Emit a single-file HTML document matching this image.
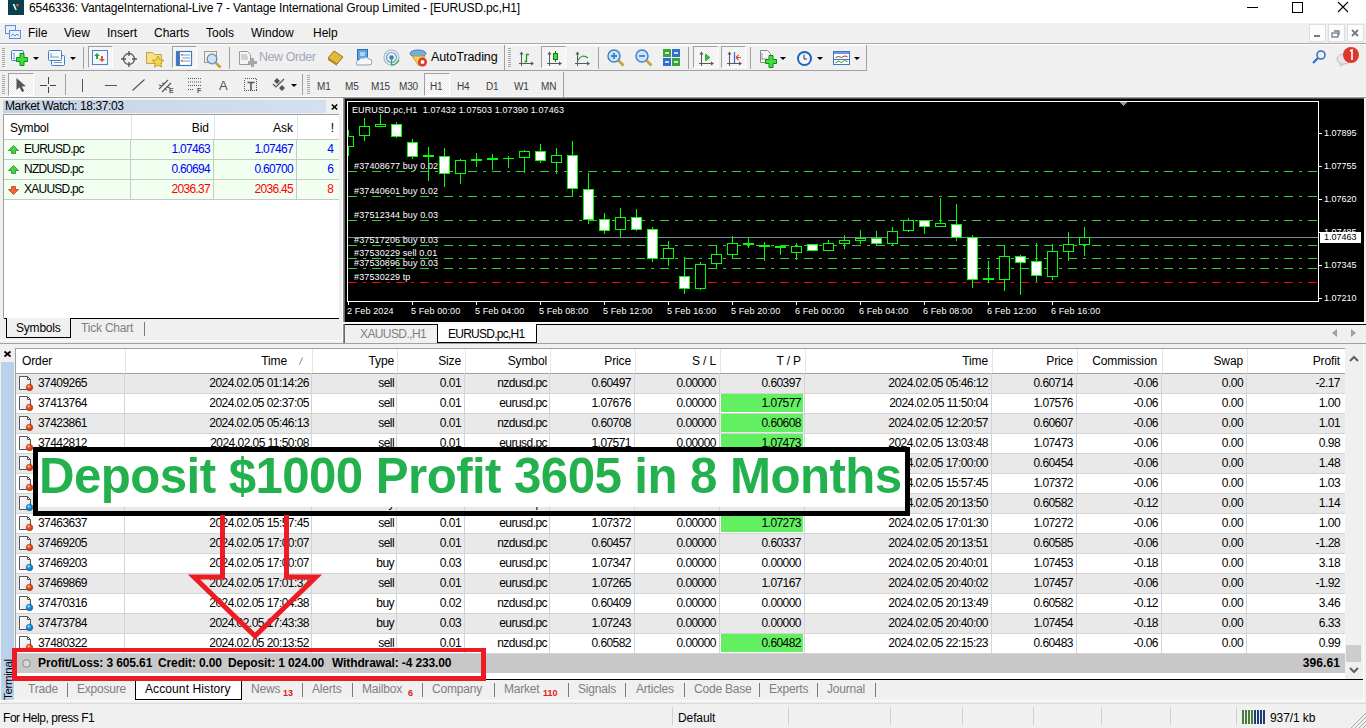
<!DOCTYPE html><html><head><meta charset="utf-8"><style>*{margin:0;padding:0;box-sizing:border-box}
html,body{width:1366px;height:728px;overflow:hidden;background:#f0f0f0;font-family:"Liberation Sans", sans-serif;position:relative}
.t{position:absolute;white-space:nowrap;font-size:12px;line-height:14px;color:#000}
svg{position:absolute;overflow:visible}
</style></head><body><svg width="0" height="0" style="position:absolute"><defs><radialGradient id="gr" cx="35%" cy="30%" r="70%"><stop offset="0" stop-color="#ffd0b0"/><stop offset=".35" stop-color="#f5602a"/><stop offset="1" stop-color="#c8340c"/></radialGradient><radialGradient id="gb" cx="35%" cy="30%" r="70%"><stop offset="0" stop-color="#d0f0ff"/><stop offset=".35" stop-color="#20a8f0"/><stop offset="1" stop-color="#0a70c0"/></radialGradient><linearGradient id="gd" x1="0" y1="0" x2="1" y2="1"><stop offset="0" stop-color="#fff"/><stop offset="1" stop-color="#e4e4e4"/></linearGradient></defs></svg>
<div style="position:absolute;left:0px;top:0px;width:1366px;height:23px;background:#fff"></div>
<div style="position:absolute;left:8px;top:0px;width:16px;height:15px;background:#07414f"></div>
<svg style="left:8px;top:0px;" width="16" height="15" viewBox="0 0 16 15"><path d="M4.6 4 L6.3 4 L8.9 10 L7.3 10Z" fill="#fff"/><path d="M7.8 4 H11.2 L9.5 7.6Z" fill="#ee5a24"/></svg>
<div class="t" style="left:29px;top:0px;font-size:12px;line-height:16px;letter-spacing:-0.15px">6546336: VantageInternational-Live 7 - Vantage International Group Limited - [EURUSD.pc,H1]</div>
<svg style="left:1240px;top:0px;" width="126" height="16" viewBox="0 0 126 16"><path d="M7 7.5 H18" stroke="#000"/><rect x="52.5" y="2.5" width="10" height="10" fill="none" stroke="#000"/><path d="M98 2 L108 12 M108 2 L98 12" stroke="#000" stroke-width="1.1"/></svg>
<div style="position:absolute;left:0px;top:43px;width:1366px;height:1px;background:#a9a9a9"></div>
<div style="position:absolute;left:0px;top:44px;width:1366px;height:1px;background:#fdfdfd"></div>
<svg style="left:4px;top:24px;" width="18" height="16" viewBox="0 0 18 16"><rect x="1.5" y="1.5" width="10" height="8" fill="#eaf1fb" stroke="#5d8fd8"/><rect x="5.5" y="6.5" width="11" height="8" fill="#eaf1fb" stroke="#5d8fd8"/><path d="M7 12 l2 -2 l2 2 l2 -2 l2 2" stroke="#5d8fd8" fill="none"/></svg>
<div class="t" style="left:28px;top:25px;font-size:12px;line-height:16px">File</div>
<div class="t" style="left:64px;top:25px;font-size:12px;line-height:16px">View</div>
<div class="t" style="left:107px;top:25px;font-size:12px;line-height:16px">Insert</div>
<div class="t" style="left:154px;top:25px;font-size:12px;line-height:16px">Charts</div>
<div class="t" style="left:206px;top:25px;font-size:12px;line-height:16px">Tools</div>
<div class="t" style="left:251px;top:25px;font-size:12px;line-height:16px">Window</div>
<div class="t" style="left:313px;top:25px;font-size:12px;line-height:16px">Help</div>
<div style="position:absolute;left:1309px;top:24px;width:17px;height:18px;background:#fcfcfc;border:1px solid #dedede"></div>
<div style="position:absolute;left:1328px;top:24px;width:17px;height:18px;background:#fcfcfc;border:1px solid #dedede"></div>
<div style="position:absolute;left:1347px;top:24px;width:17px;height:18px;background:#fcfcfc;border:1px solid #dedede"></div>
<svg style="left:1309px;top:24px;" width="57" height="18" viewBox="0 0 57 18"><rect x="5" y="11" width="6" height="2" fill="#6d7c8a"/><rect x="23" y="9" width="6" height="4" fill="none" stroke="#6d7c8a" stroke-width="1.3"/><path d="M25 7 h5 v4" fill="none" stroke="#6d7c8a" stroke-width="1.3"/><path d="M43 6 l6 6 M49 6 l-6 6" stroke="#6d7c8a" stroke-width="1.8"/></svg>
<div style="position:absolute;left:0px;top:70px;width:866px;height:1px;background:#a0a0a0"></div>
<div style="position:absolute;left:866px;top:45px;width:1px;height:26px;background:#a0a0a0"></div>
<div style="position:absolute;left:505px;top:45px;width:361px;height:1px;background:#fafafa"></div>
<div style="position:absolute;left:504px;top:45px;width:1px;height:26px;background:#a0a0a0"></div>
<svg style="left:2px;top:48px;" width="3" height="19" viewBox="0 0 3 19"><rect x="0" y="0" width="3" height="1" fill="#a8a8a8"/><rect x="0" y="2" width="3" height="1" fill="#a8a8a8"/><rect x="0" y="4" width="3" height="1" fill="#a8a8a8"/><rect x="0" y="6" width="3" height="1" fill="#a8a8a8"/><rect x="0" y="8" width="3" height="1" fill="#a8a8a8"/><rect x="0" y="10" width="3" height="1" fill="#a8a8a8"/><rect x="0" y="12" width="3" height="1" fill="#a8a8a8"/><rect x="0" y="14" width="3" height="1" fill="#a8a8a8"/><rect x="0" y="16" width="3" height="1" fill="#a8a8a8"/><rect x="0" y="18" width="3" height="1" fill="#a8a8a8"/></svg>
<svg style="left:11px;top:50px;" width="18" height="16" viewBox="0 0 18 16"><rect x="0.5" y="0.5" width="12" height="10" rx="1" fill="#f2f7fd" stroke="#3f7fc8"/><path d="M3 3 v6 M2 4 l1 -1 l1 1 M2 8 l1 1 l1 -1" stroke="#7d9cc0" fill="none"/><path d="M5.5 7.5 h3.5 v-4 h4 v4 h3.5 v4 h-3.5 v4 h-4 v-4 h-3.5Z" fill="#3ee03e" stroke="#15881a"/></svg>
<svg style="left:33px;top:57px;" width="6" height="3" viewBox="0 0 6 3"><path d="M0 0 H6 L3 3Z" fill="#000"/></svg>
<svg style="left:48px;top:50px;" width="18" height="17" viewBox="0 0 18 17"><rect x="3.5" y="5.5" width="13" height="10" rx="1" fill="#f4f8fd" stroke="#3f7fc8"/><rect x="0.5" y="0.5" width="13" height="10" rx="1" fill="#f4f8fd" stroke="#3f7fc8"/><path d="M3 3 v5 M3 7 h8 M6 12.5 h8" stroke="#7d9cc0" fill="none"/></svg>
<svg style="left:70px;top:57px;" width="6" height="3" viewBox="0 0 6 3"><path d="M0 0 H6 L3 3Z" fill="#000"/></svg>
<div style="position:absolute;left:83px;top:47px;width:1px;height:22px;background:#a0a0a0"></div>
<div style="position:absolute;left:88px;top:46px;width:25px;height:22px;background-color:#f9f9f9;background-image:repeating-conic-gradient(#ededed 0 25%,#fbfbfb 0 50%);background-size:2px 2px;border-top:1px solid #a0a0a0;border-left:1px solid #a0a0a0;border-right:1px solid #fff;border-bottom:1px solid #fff"></div>
<svg style="left:92px;top:50px;" width="17" height="16" viewBox="0 0 17 16"><rect x="0.5" y="0.5" width="15" height="14" fill="#f4f8fd" stroke="#4b82c8"/><path d="M5 3 l-3 3 h2 v3 h2 v-3 h2Z" fill="#2aa52a"/><path d="M10 12 l3 -3 h-2 v-3 h-2 v3 h-2Z" fill="#e5542a"/></svg>
<svg style="left:121px;top:50.5px;" width="16" height="16" viewBox="0 0 16 16"><circle cx="8" cy="8" r="5.5" fill="none" stroke="#555" stroke-width="1.3"/><path d="M8 0 v5 M8 11 v5 M0 8 h5 M11 8 h5" stroke="#555" stroke-width="1.3"/></svg>
<svg style="left:146px;top:50px;" width="19" height="18" viewBox="0 0 19 18"><path d="M0.5 2.5 h6 l2 2 h7 v9 h-15Z" fill="#f7e08a" stroke="#c9a236"/><path d="M12 6 l1.8 3.8 4 .5 -3 2.8 .8 4 -3.6 -2 -3.6 2 .8 -4 -3 -2.8 4 -.5Z" fill="#f8d548" stroke="#b8902a" stroke-width=".8"/></svg>
<div style="position:absolute;left:172px;top:46px;width:25px;height:22px;background-color:#f9f9f9;background-image:repeating-conic-gradient(#ededed 0 25%,#fbfbfb 0 50%);background-size:2px 2px;border-top:1px solid #a0a0a0;border-left:1px solid #a0a0a0;border-right:1px solid #fff;border-bottom:1px solid #fff"></div>
<svg style="left:176px;top:51px;" width="17" height="16" viewBox="0 0 17 16"><rect x="0.5" y="0.5" width="15" height="14" fill="#fff" stroke="#3f78c6" stroke-width="1.2"/><rect x="1" y="1" width="3" height="13" fill="#3f78c6"/><path d="M6 4 h8 M6 7 h8 M6 10 h8" stroke="#7a9cc9"/><rect x="5" y="3" width="1.5" height="1.5" fill="#e33"/><rect x="5" y="9" width="1.5" height="1.5" fill="#e33"/></svg>
<svg style="left:204px;top:51px;" width="19" height="18" viewBox="0 0 19 18"><rect x="0.5" y="0.5" width="12" height="11" fill="#f3efe2" stroke="#a39a85"/><circle cx="8" cy="8" r="4.8" fill="#cfe1f5" stroke="#4a86cf" stroke-width="1.3" opacity=".9"/><path d="M11.5 11.5 l5 5" stroke="#c9a236" stroke-width="2.5"/></svg>
<div style="position:absolute;left:229px;top:47px;width:1px;height:22px;background:#a0a0a0"></div>
<svg style="left:239px;top:50.5px;" width="18" height="19" viewBox="0 0 18 19"><path d="M0.5 0.5 h8 l3 3 v10 h-11Z" fill="#f5f5f5" stroke="#9a9a9a"/><path d="M2 4 h6 M2 6 h7 M2 8 h7" stroke="#b0b0b0"/><path d="M9 10 h3 v-3 h3 v3 h3 v3 h-3 v3 h-3 v-3 h-3Z" fill="#a8a8a8"/></svg>
<div class="t" style="left:259px;top:49px;font-size:12.5px;line-height:16px;color:#a3a9b6;letter-spacing:-0.45px">New Order</div>
<svg style="left:327px;top:50px;" width="17" height="16" viewBox="0 0 17 16"><path d="M1 8 L7 1 L16 7 L10 14Z" fill="#e3b93a" stroke="#9c7314"/><path d="M1 8 L10 14 L10 16 L1 10Z" fill="#b68a1c"/></svg>
<svg style="left:355px;top:49px;" width="17" height="18" viewBox="0 0 17 18"><rect x="2.5" y="0.5" width="10" height="10" fill="#5aa7e8" stroke="#2f6fb5"/><path d="M5 4 h5 M5 6 h5" stroke="#fff"/><path d="M2 16 q-2 -4 2 -5 q1 -3 5 -2 q3 -2 5 1 q3 0 3 3 q0 3 -3 3Z" fill="#f3f6fa" stroke="#8aa3bf"/></svg>
<svg style="left:383px;top:49px;" width="17" height="17" viewBox="0 0 17 17"><circle cx="8.5" cy="8.5" r="7.5" fill="none" stroke="#9fb7d6" stroke-width="1.2"/><circle cx="8.5" cy="8.5" r="5" fill="none" stroke="#6f9cd3" stroke-width="1.2"/><circle cx="8.5" cy="8.5" r="2.3" fill="#3c7bd0"/><path d="M8.5 8.5 v8 M9 16 q4 0 7 -5" stroke="#35b035" stroke-width="1.3" fill="none"/></svg>
<svg style="left:410px;top:49px;" width="18" height="18" viewBox="0 0 18 18"><ellipse cx="8" cy="4.5" rx="8" ry="3.5" fill="#70afe3" stroke="#3f7dbb"/><path d="M2 7 L9 17 L15 7Z" fill="#f1d45a" stroke="#c69d28"/><circle cx="12.5" cy="13" r="4.5" fill="#e23a2a"/><rect x="10.8" y="11.3" width="3.4" height="3.4" fill="#fff"/></svg>
<div class="t" style="left:431px;top:49px;font-size:12.5px;line-height:16px;letter-spacing:-0.1px">AutoTrading</div>
<svg style="left:508px;top:48px;" width="3" height="19" viewBox="0 0 3 19"><rect x="0" y="0" width="3" height="1" fill="#a8a8a8"/><rect x="0" y="2" width="3" height="1" fill="#a8a8a8"/><rect x="0" y="4" width="3" height="1" fill="#a8a8a8"/><rect x="0" y="6" width="3" height="1" fill="#a8a8a8"/><rect x="0" y="8" width="3" height="1" fill="#a8a8a8"/><rect x="0" y="10" width="3" height="1" fill="#a8a8a8"/><rect x="0" y="12" width="3" height="1" fill="#a8a8a8"/><rect x="0" y="14" width="3" height="1" fill="#a8a8a8"/><rect x="0" y="16" width="3" height="1" fill="#a8a8a8"/><rect x="0" y="18" width="3" height="1" fill="#a8a8a8"/></svg>
<svg style="left:518px;top:51px;" width="17" height="16" viewBox="0 0 17 16"><path d="M3.5 2 V15 M1 12.5 H15" stroke="#585858" fill="none"/><path d="M1.5 3.5 L3.5 0.5 L5.5 3.5Z M13 10.5 L16 12.5 L13 14.5Z" fill="#585858"/><path d="M6.5 10.5 H8.5 V3.5 H11" stroke="#1f9a1f" stroke-width="1.3" fill="none"/></svg>
<div style="position:absolute;left:541px;top:46px;width:25px;height:22px;background-color:#f9f9f9;background-image:repeating-conic-gradient(#ededed 0 25%,#fbfbfb 0 50%);background-size:2px 2px;border-top:1px solid #a0a0a0;border-left:1px solid #a0a0a0;border-right:1px solid #fff;border-bottom:1px solid #fff"></div>
<svg style="left:546px;top:51px;" width="17" height="16" viewBox="0 0 17 16"><path d="M3.5 2 V15 M1 12.5 H15" stroke="#585858" fill="none"/><path d="M1.5 3.5 L3.5 0.5 L5.5 3.5Z M13 10.5 L16 12.5 L13 14.5Z" fill="#585858"/><path d="M9.5 0 V11" stroke="#137a13"/><rect x="7.5" y="2.5" width="4" height="6" fill="#3ee03e" stroke="#137a13"/></svg>
<svg style="left:574px;top:51px;" width="17" height="16" viewBox="0 0 17 16"><path d="M3.5 2 V15 M1 12.5 H15" stroke="#585858" fill="none"/><path d="M1.5 3.5 L3.5 0.5 L5.5 3.5Z M13 10.5 L16 12.5 L13 14.5Z" fill="#585858"/><path d="M3.5 10 Q8 2 14 7" stroke="#2a9a3a" stroke-width="1.2" fill="none"/></svg>
<div style="position:absolute;left:598px;top:47px;width:1px;height:22px;background:#a0a0a0"></div>
<svg style="left:607px;top:49px;" width="18" height="18" viewBox="0 0 18 18"><circle cx="7" cy="7" r="6" fill="#cfe4f8" stroke="#3f82cc" stroke-width="1.5"/><path d="M4 7 h6 M7 4 v6" stroke="#3f82cc" stroke-width="1.8"/><path d="M11.5 11.5 l5 5" stroke="#c9a236" stroke-width="2.8"/></svg>
<svg style="left:635px;top:49px;" width="18" height="18" viewBox="0 0 18 18"><circle cx="7" cy="7" r="6" fill="#cfe4f8" stroke="#3f82cc" stroke-width="1.5"/><path d="M4 7 h6" stroke="#3f82cc" stroke-width="1.8"/><path d="M11.5 11.5 l5 5" stroke="#c9a236" stroke-width="2.8"/></svg>
<svg style="left:663px;top:49px;" width="17" height="17" viewBox="0 0 17 17"><rect x="0" y="0" width="8" height="8" fill="#3aa53a"/><rect x="9" y="0" width="8" height="8" fill="#2f6fcf"/><rect x="0" y="9" width="8" height="8" fill="#2f6fcf"/><rect x="9" y="9" width="8" height="8" fill="#3aa53a"/><path d="M2 4 h4 M11 4 h4 M2 13 h4 M11 13 h4" stroke="#fff" stroke-width="1.5"/></svg>
<div style="position:absolute;left:688px;top:47px;width:1px;height:22px;background:#a0a0a0"></div>
<div style="position:absolute;left:693px;top:46px;width:25px;height:22px;background-color:#f9f9f9;background-image:repeating-conic-gradient(#ededed 0 25%,#fbfbfb 0 50%);background-size:2px 2px;border-top:1px solid #a0a0a0;border-left:1px solid #a0a0a0;border-right:1px solid #fff;border-bottom:1px solid #fff"></div>
<svg style="left:698px;top:51px;" width="17" height="16" viewBox="0 0 17 16"><path d="M3.5 2 V15 M1 12.5 H15" stroke="#585858" fill="none"/><path d="M1.5 3.5 L3.5 0.5 L5.5 3.5Z M13 10.5 L16 12.5 L13 14.5Z" fill="#585858"/><path d="M7.5 3 L12 6.5 L7.5 10Z" fill="#2fc02f" stroke="#1b8a1b" stroke-width=".6"/></svg>
<div style="position:absolute;left:721px;top:46px;width:25px;height:22px;background-color:#f9f9f9;background-image:repeating-conic-gradient(#ededed 0 25%,#fbfbfb 0 50%);background-size:2px 2px;border-top:1px solid #a0a0a0;border-left:1px solid #a0a0a0;border-right:1px solid #fff;border-bottom:1px solid #fff"></div>
<svg style="left:726px;top:51px;" width="17" height="16" viewBox="0 0 17 16"><path d="M3.5 2 V15 M1 12.5 H15" stroke="#585858" fill="none"/><path d="M1.5 3.5 L3.5 0.5 L5.5 3.5Z M13 10.5 L16 12.5 L13 14.5Z" fill="#585858"/><path d="M8.5 1 V12" stroke="#2f6fcf" stroke-width="1.2"/><path d="M10 6.5 h5 M10 6.5 l2.5 -2.5 M10 6.5 l2.5 2.5" stroke="#d9502a" stroke-width="1.2" fill="none"/></svg>
<div style="position:absolute;left:750px;top:47px;width:1px;height:22px;background:#a0a0a0"></div>
<svg style="left:760px;top:50px;" width="18" height="18" viewBox="0 0 18 18"><path d="M0.5 0.5 h7 l3 3 v9 h-10Z" fill="#f7f7f7" stroke="#8a8a8a"/><path d="M2 3 v7 M2 9 h5" stroke="#999" fill="none"/><path d="M5.5 9.5 h3.5 v-4 h4 v4 h3.5 v4 h-3.5 v4 h-4 v-4 h-3.5Z" fill="#3ee03e" stroke="#15881a"/></svg>
<svg style="left:780px;top:57px;" width="6" height="3" viewBox="0 0 6 3"><path d="M0 0 H6 L3 3Z" fill="#000"/></svg>
<svg style="left:796px;top:50px;" width="17" height="17" viewBox="0 0 17 17"><circle cx="8.5" cy="8.5" r="7.5" fill="#1f63c0"/><circle cx="8.5" cy="8.5" r="5.5" fill="#f4f7fb"/><path d="M8 4.5 v4.5 h3" stroke="#333" stroke-width="1" fill="none"/></svg>
<svg style="left:817px;top:57px;" width="6" height="3" viewBox="0 0 6 3"><path d="M0 0 H6 L3 3Z" fill="#000"/></svg>
<svg style="left:833px;top:51px;" width="17" height="15" viewBox="0 0 17 15"><rect x="0.5" y="0.5" width="16" height="13" fill="#fff" stroke="#3f78c6"/><rect x="1" y="1" width="15" height="2" fill="#6f9ad8"/><path d="M1 8.5 h15" stroke="#3f78c6"/><path d="M2.5 6.5 l3 -1 l3 1 l3 -1.5 l3 0.5" stroke="#b0302a" fill="none"/><path d="M2.5 12 l3 -2 l3 1.5 l3 -2 l3 1" stroke="#2a9a2a" fill="none"/></svg>
<svg style="left:854px;top:57px;" width="6" height="3" viewBox="0 0 6 3"><path d="M0 0 H6 L3 3Z" fill="#000"/></svg>
<svg style="left:1312px;top:50px;" width="14" height="14" viewBox="0 0 14 14"><circle cx="9" cy="5" r="4" fill="none" stroke="#2f6fcf" stroke-width="1.6"/><path d="M6 8 l-5 5" stroke="#2f6fcf" stroke-width="2.2"/></svg>
<svg style="left:1334px;top:46px;" width="28" height="22" viewBox="0 0 28 22"><ellipse cx="10" cy="13" rx="7" ry="5" fill="#e6e6e6" stroke="#bdbdbd"/><path d="M7 17 l-1 3 l4 -2" fill="#e6e6e6" stroke="#bdbdbd"/><circle cx="17" cy="9" r="8" fill="#e0352a"/><path d="M16 5 l2 -1 v10" stroke="#fff" stroke-width="1.6" fill="none"/></svg>
<div style="position:absolute;left:0px;top:96px;width:1366px;height:1px;background:#fafafa"></div>
<div style="position:absolute;left:0px;top:97px;width:1366px;height:1px;background:#9a9a9a"></div>
<svg style="left:2px;top:75px;" width="3" height="19" viewBox="0 0 3 19"><rect x="0" y="0" width="3" height="1" fill="#a8a8a8"/><rect x="0" y="2" width="3" height="1" fill="#a8a8a8"/><rect x="0" y="4" width="3" height="1" fill="#a8a8a8"/><rect x="0" y="6" width="3" height="1" fill="#a8a8a8"/><rect x="0" y="8" width="3" height="1" fill="#a8a8a8"/><rect x="0" y="10" width="3" height="1" fill="#a8a8a8"/><rect x="0" y="12" width="3" height="1" fill="#a8a8a8"/><rect x="0" y="14" width="3" height="1" fill="#a8a8a8"/><rect x="0" y="16" width="3" height="1" fill="#a8a8a8"/><rect x="0" y="18" width="3" height="1" fill="#a8a8a8"/></svg>
<div style="position:absolute;left:8px;top:73px;width:26px;height:23px;background-color:#f9f9f9;background-image:repeating-conic-gradient(#ededed 0 25%,#fbfbfb 0 50%);background-size:2px 2px;border-top:1px solid #a0a0a0;border-left:1px solid #a0a0a0;border-right:1px solid #fff;border-bottom:1px solid #fff"></div>
<svg style="left:16px;top:78px;" width="11" height="15" viewBox="0 0 11 15"><path d="M0.5 0 L0.5 12 L3.5 9.3 L6 14 L8.3 13 L5.8 8.5 L9.8 8.2Z" fill="#555"/></svg>
<svg style="left:40px;top:77px;" width="16" height="16" viewBox="0 0 16 16"><path d="M8.5 0 v7 M8.5 10 v6 M0 8.5 h7 M10 8.5 h6" stroke="#444" stroke-width="1"/></svg>
<div style="position:absolute;left:65px;top:74px;width:1px;height:21px;background:#a0a0a0"></div>
<div style="position:absolute;left:82px;top:79px;width:1px;height:13px;background:#555"></div>
<div style="position:absolute;left:105px;top:85px;width:12px;height:1px;background:#555"></div>
<svg style="left:132px;top:79px;" width="13" height="12" viewBox="0 0 13 12"><path d="M0.5 11.5 L12.5 0.5" stroke="#555" stroke-width="1.1"/></svg>
<svg style="left:158px;top:77px;" width="17" height="16" viewBox="0 0 17 16"><path d="M1 12 L10 3 M4 15 L13 6 M1 8 l3 1 M4 6 l3 1 M6 12 l3 1 M9 10 l3 1" stroke="#555" stroke-width="1.1"/><text x="11" y="16" font-size="7" font-weight="bold" fill="#555" font-family="Liberation Sans">E</text></svg>
<svg style="left:188px;top:77px;" width="15" height="16" viewBox="0 0 15 16"><path d="M0 1.5 h13 M0 5 h13 M0 8.5 h13 M0 12.5 h6" stroke="#555" stroke-dasharray="1 1"/><text x="9" y="16" font-size="7" font-weight="bold" fill="#555" font-family="Liberation Sans">F</text></svg>
<div class="t" style="left:219px;top:78px;font-size:13px;line-height:16px;color:#555">A</div>
<svg style="left:244px;top:78px;" width="14" height="14" viewBox="0 0 14 14"><rect x="0.5" y="0.5" width="12" height="12" fill="none" stroke="#555" stroke-dasharray="1 1" shape-rendering="crispEdges"/><path d="M3.5 4.5 h7 M7 4.5 v8" stroke="#555" stroke-width="1.6"/></svg>
<svg style="left:272px;top:77px;" width="15" height="15" viewBox="0 0 15 15"><path d="M2 4 l3 -3 l3 3 l-3 3Z M7 11 l3 -3 l3 3 l-3 3Z" fill="#555"/><path d="M1 7 l3 3 l8 -8" stroke="#555" fill="none" stroke-width="1.2"/></svg>
<svg style="left:291px;top:84px;" width="6" height="3" viewBox="0 0 6 3"><path d="M0 0 H6 L3 3Z" fill="#000"/></svg>
<div style="position:absolute;left:302px;top:74px;width:1px;height:21px;background:#a0a0a0"></div>
<svg style="left:307px;top:75px;" width="3" height="19" viewBox="0 0 3 19"><rect x="0" y="0" width="3" height="1" fill="#a8a8a8"/><rect x="0" y="2" width="3" height="1" fill="#a8a8a8"/><rect x="0" y="4" width="3" height="1" fill="#a8a8a8"/><rect x="0" y="6" width="3" height="1" fill="#a8a8a8"/><rect x="0" y="8" width="3" height="1" fill="#a8a8a8"/><rect x="0" y="10" width="3" height="1" fill="#a8a8a8"/><rect x="0" y="12" width="3" height="1" fill="#a8a8a8"/><rect x="0" y="14" width="3" height="1" fill="#a8a8a8"/><rect x="0" y="16" width="3" height="1" fill="#a8a8a8"/><rect x="0" y="18" width="3" height="1" fill="#a8a8a8"/></svg>
<div class="t" style="left:317px;top:79.5px;font-size:10px;line-height:13px;color:#3c3c3c;letter-spacing:-0.15px">M1</div>
<div class="t" style="left:345px;top:79.5px;font-size:10px;line-height:13px;color:#3c3c3c;letter-spacing:-0.15px">M5</div>
<div class="t" style="left:371px;top:79.5px;font-size:10px;line-height:13px;color:#3c3c3c;letter-spacing:-0.15px">M15</div>
<div class="t" style="left:399px;top:79.5px;font-size:10px;line-height:13px;color:#3c3c3c;letter-spacing:-0.15px">M30</div>
<div style="position:absolute;left:424px;top:73px;width:26px;height:23px;background-color:#f9f9f9;background-image:repeating-conic-gradient(#ededed 0 25%,#fbfbfb 0 50%);background-size:2px 2px;border-top:1px solid #a0a0a0;border-left:1px solid #a0a0a0;border-right:1px solid #fff;border-bottom:1px solid #fff"></div>
<div class="t" style="left:430px;top:79.5px;font-size:10px;line-height:13px;color:#3c3c3c;letter-spacing:-0.15px">H1</div>
<div class="t" style="left:457px;top:79.5px;font-size:10px;line-height:13px;color:#3c3c3c;letter-spacing:-0.15px">H4</div>
<div class="t" style="left:486px;top:79.5px;font-size:10px;line-height:13px;color:#3c3c3c;letter-spacing:-0.15px">D1</div>
<div class="t" style="left:514px;top:79.5px;font-size:10px;line-height:13px;color:#3c3c3c;letter-spacing:-0.15px">W1</div>
<div class="t" style="left:541px;top:79.5px;font-size:10px;line-height:13px;color:#3c3c3c;letter-spacing:-0.15px">MN</div>
<div style="position:absolute;left:563px;top:72px;width:1px;height:25px;background:#a0a0a0"></div>
<div style="position:absolute;left:0px;top:98px;width:344px;height:245px;background:#f0f0f0;border-top:1px solid #fafafa"></div>
<div style="position:absolute;left:3px;top:100px;width:323px;height:13px;background:linear-gradient(to right,#c5d3e3,#d3e0ee)"></div>
<div class="t" style="left:5px;top:99px;font-size:12px;line-height:14px;letter-spacing:-0.38px">Market Watch: 18:37:03</div>
<svg style="left:331px;top:104px;" width="7" height="6" viewBox="0 0 7 6"><path d="M0.8 0.5 l5.4 5 M6.2 0.5 l-5.4 5" stroke="#000" stroke-width="1.6"/></svg>
<div style="position:absolute;left:3px;top:114px;width:336px;height:205px;background:#fff;border-left:1px solid #a0a0a0;border-top:1px solid #a0a0a0"></div>
<div style="position:absolute;left:131px;top:115px;width:1px;height:24px;background:#e3e3e3"></div>
<div style="position:absolute;left:214px;top:115px;width:1px;height:24px;background:#e3e3e3"></div>
<div style="position:absolute;left:297px;top:115px;width:1px;height:24px;background:#e3e3e3"></div>
<div class="t" style="left:10px;top:121px;font-size:12px;letter-spacing:-0.2px">Symbol</div>
<div class="t" style="right:1157px;top:121px;font-size:12px">Bid</div>
<div class="t" style="right:1073px;top:121px;font-size:12px">Ask</div>
<div class="t" style="right:1032px;top:121px;font-size:12px">!</div>
<div style="position:absolute;left:4px;top:139px;width:335px;height:20px;background:#f0fff0"></div>
<div style="position:absolute;left:4px;top:139px;width:335px;height:1px;background:#c8c8c8"></div>
<div style="position:absolute;left:130px;top:139px;width:1px;height:20px;background:#c8c8c8"></div>
<div style="position:absolute;left:213px;top:139px;width:1px;height:20px;background:#c8c8c8"></div>
<div style="position:absolute;left:296px;top:139px;width:1px;height:20px;background:#c8c8c8"></div>
<svg style="left:8px;top:145px;" width="11" height="10" viewBox="0 0 11 10"><path d="M5.5 0.5 L10.5 5.5 H7.5 V8.5 H3.5 V5.5 H0.5Z" fill="#4ccd4c" stroke="#1e8a1e" stroke-width=".8"/></svg>
<div class="t" style="left:24px;top:142px;font-size:12px;letter-spacing:-0.75px">EURUSD.pc</div>
<div class="t" style="right:1156px;top:142px;font-size:12px;color:#0000ff;letter-spacing:-0.7px">1.07463</div>
<div class="t" style="right:1073px;top:142px;font-size:12px;color:#0000ff;letter-spacing:-0.7px">1.07467</div>
<div class="t" style="right:1032px;top:142px;font-size:12px;color:#0000ff">4</div>
<div style="position:absolute;left:4px;top:159px;width:335px;height:20px;background:#f0fff0"></div>
<div style="position:absolute;left:4px;top:159px;width:335px;height:1px;background:#c8c8c8"></div>
<div style="position:absolute;left:130px;top:159px;width:1px;height:20px;background:#c8c8c8"></div>
<div style="position:absolute;left:213px;top:159px;width:1px;height:20px;background:#c8c8c8"></div>
<div style="position:absolute;left:296px;top:159px;width:1px;height:20px;background:#c8c8c8"></div>
<svg style="left:8px;top:165px;" width="11" height="10" viewBox="0 0 11 10"><path d="M5.5 0.5 L10.5 5.5 H7.5 V8.5 H3.5 V5.5 H0.5Z" fill="#4ccd4c" stroke="#1e8a1e" stroke-width=".8"/></svg>
<div class="t" style="left:24px;top:162px;font-size:12px;letter-spacing:-0.75px">NZDUSD.pc</div>
<div class="t" style="right:1156px;top:162px;font-size:12px;color:#0000ff;letter-spacing:-0.7px">0.60694</div>
<div class="t" style="right:1073px;top:162px;font-size:12px;color:#0000ff;letter-spacing:-0.7px">0.60700</div>
<div class="t" style="right:1032px;top:162px;font-size:12px;color:#0000ff">6</div>
<div style="position:absolute;left:4px;top:179px;width:335px;height:20px;background:#f0fff0"></div>
<div style="position:absolute;left:4px;top:179px;width:335px;height:1px;background:#c8c8c8"></div>
<div style="position:absolute;left:130px;top:179px;width:1px;height:20px;background:#c8c8c8"></div>
<div style="position:absolute;left:213px;top:179px;width:1px;height:20px;background:#c8c8c8"></div>
<div style="position:absolute;left:296px;top:179px;width:1px;height:20px;background:#c8c8c8"></div>
<svg style="left:8px;top:185px;" width="11" height="10" viewBox="0 0 11 10"><path d="M5.5 9.5 L10.5 4.5 H7.5 V1.5 H3.5 V4.5 H0.5Z" fill="#f5643a" stroke="#c23a1a" stroke-width=".8"/></svg>
<div class="t" style="left:24px;top:182px;font-size:12px;letter-spacing:-0.75px">XAUUSD.pc</div>
<div class="t" style="right:1156px;top:182px;font-size:12px;color:#ff0000;letter-spacing:-0.7px">2036.37</div>
<div class="t" style="right:1073px;top:182px;font-size:12px;color:#ff0000;letter-spacing:-0.7px">2036.45</div>
<div class="t" style="right:1032px;top:182px;font-size:12px;color:#ff0000">8</div>
<div style="position:absolute;left:4px;top:199px;width:335px;height:1px;background:#c8c8c8"></div>
<div style="position:absolute;left:3px;top:318px;width:337px;height:21px;background:#f0f0f0"></div>
<div style="position:absolute;left:70px;top:318px;width:269px;height:1px;background:#000"></div>
<div style="position:absolute;left:6px;top:318px;width:65px;height:20px;background:#f0f0f0;border-left:1px solid #000;border-right:1px solid #000;border-bottom:1px solid #000"></div>
<div style="position:absolute;left:4px;top:318px;width:2px;height:1px;background:#000"></div>
<div class="t" style="left:16px;top:321px;font-size:12px;letter-spacing:-0.2px">Symbols</div>
<div class="t" style="left:81px;top:321px;font-size:12px;color:#7f7f7f;letter-spacing:-0.2px">Tick Chart</div>
<div style="position:absolute;left:144px;top:322px;width:1px;height:14px;background:#7a7a7a"></div>
<div style="position:absolute;left:0px;top:340px;width:342px;height:1px;background:#fff"></div>
<div style="position:absolute;left:344px;top:98px;width:1022px;height:245px;background:#f0f0f0"></div>
<div style="position:absolute;left:345px;top:99px;width:1019px;height:223px;background:#000"></div>
<div style="position:absolute;left:345px;top:98px;width:1019px;height:1px;background:#555"></div>
<svg style="left:345px;top:99px" width="1019" height="223" viewBox="0 0 1019 223" shape-rendering="crispEdges"><clipPath id="pc"><rect x="3" y="3" width="970" height="199"/></clipPath><g clip-path="url(#pc)"><path d="M3 72.5 H973" stroke="#32cd32" stroke-width="1" stroke-dasharray="9 6 3 6"/><path d="M3 97.5 H973" stroke="#32cd32" stroke-width="1" stroke-dasharray="9 6 3 6"/><path d="M3 121.5 H973" stroke="#32cd32" stroke-width="1" stroke-dasharray="9 6 3 6"/><path d="M3 146.5 H973" stroke="#32cd32" stroke-width="1" stroke-dasharray="9 6 3 6"/><path d="M3 159.5 H973" stroke="#32cd32" stroke-width="1" stroke-dasharray="9 6 3 6"/><path d="M3 169.5 H973" stroke="#32cd32" stroke-width="1" stroke-dasharray="9 6 3 6"/><path d="M3 183.5 H973" stroke="#ff0000" stroke-width="1" stroke-dasharray="9 6 3 6"/><path d="M3 138.5 H973" stroke="#778899" stroke-width="1"/><rect x="3" y="31" width="1" height="26" fill="#00ff00"/><rect x="-2" y="37" width="11" height="11" fill="#00ff00"/><rect x="-1" y="38" width="9" height="9" fill="#000"/><rect x="19" y="19" width="1" height="23" fill="#00ff00"/><rect x="14" y="27" width="11" height="10" fill="#00ff00"/><rect x="15" y="28" width="9" height="8" fill="#000"/><rect x="35" y="15" width="1" height="13" fill="#00ff00"/><rect x="30" y="25" width="11" height="3" fill="#00ff00"/><rect x="31" y="26" width="9" height="1" fill="#000"/><rect x="51" y="23" width="1" height="16" fill="#00ff00"/><rect x="46" y="25" width="11" height="13" fill="#00ff00"/><rect x="47" y="26" width="9" height="11" fill="#fff"/><rect x="67" y="40" width="1" height="20" fill="#00ff00"/><rect x="62" y="43" width="11" height="15" fill="#00ff00"/><rect x="63" y="44" width="9" height="13" fill="#fff"/><rect x="83" y="48" width="1" height="34" fill="#00ff00"/><rect x="78" y="56" width="11" height="2" fill="#00ff00"/><rect x="99" y="49" width="1" height="39" fill="#00ff00"/><rect x="94" y="57" width="11" height="18" fill="#00ff00"/><rect x="95" y="58" width="9" height="16" fill="#fff"/><rect x="115" y="60" width="1" height="25" fill="#00ff00"/><rect x="110" y="61" width="11" height="14" fill="#00ff00"/><rect x="111" y="62" width="9" height="12" fill="#000"/><rect x="131" y="54" width="1" height="14" fill="#00ff00"/><rect x="126" y="60" width="11" height="2" fill="#00ff00"/><rect x="147" y="55" width="1" height="16" fill="#00ff00"/><rect x="142" y="59" width="11" height="2" fill="#00ff00"/><rect x="163" y="57" width="1" height="12" fill="#00ff00"/><rect x="158" y="59" width="11" height="1" fill="#00ff00"/><rect x="179" y="51" width="1" height="23" fill="#00ff00"/><rect x="174" y="52" width="11" height="7" fill="#00ff00"/><rect x="175" y="53" width="9" height="5" fill="#000"/><rect x="195" y="45" width="1" height="19" fill="#00ff00"/><rect x="190" y="52" width="11" height="10" fill="#00ff00"/><rect x="191" y="53" width="9" height="8" fill="#fff"/><rect x="211" y="49" width="1" height="26" fill="#00ff00"/><rect x="206" y="56" width="11" height="8" fill="#00ff00"/><rect x="207" y="57" width="9" height="6" fill="#000"/><rect x="227" y="42" width="1" height="56" fill="#00ff00"/><rect x="222" y="56" width="11" height="34" fill="#00ff00"/><rect x="223" y="57" width="9" height="32" fill="#fff"/><rect x="243" y="74" width="1" height="51" fill="#00ff00"/><rect x="238" y="90" width="11" height="31" fill="#00ff00"/><rect x="239" y="91" width="9" height="29" fill="#fff"/><rect x="259" y="114" width="1" height="21" fill="#00ff00"/><rect x="254" y="120" width="11" height="12" fill="#00ff00"/><rect x="255" y="121" width="9" height="10" fill="#fff"/><rect x="275" y="109" width="1" height="29" fill="#00ff00"/><rect x="270" y="118" width="11" height="13" fill="#00ff00"/><rect x="271" y="119" width="9" height="11" fill="#000"/><rect x="291" y="110" width="1" height="22" fill="#00ff00"/><rect x="286" y="118" width="11" height="13" fill="#00ff00"/><rect x="287" y="119" width="9" height="11" fill="#fff"/><rect x="307" y="128" width="1" height="35" fill="#00ff00"/><rect x="302" y="130" width="11" height="30" fill="#00ff00"/><rect x="303" y="131" width="9" height="28" fill="#fff"/><rect x="323" y="142" width="1" height="25" fill="#00ff00"/><rect x="318" y="149" width="11" height="11" fill="#00ff00"/><rect x="319" y="150" width="9" height="9" fill="#000"/><rect x="339" y="158" width="1" height="37" fill="#00ff00"/><rect x="334" y="177" width="11" height="13" fill="#00ff00"/><rect x="335" y="178" width="9" height="11" fill="#fff"/><rect x="355" y="163" width="1" height="28" fill="#00ff00"/><rect x="350" y="165" width="11" height="25" fill="#00ff00"/><rect x="351" y="166" width="9" height="23" fill="#000"/><rect x="371" y="146" width="1" height="24" fill="#00ff00"/><rect x="366" y="155" width="11" height="10" fill="#00ff00"/><rect x="367" y="156" width="9" height="8" fill="#000"/><rect x="387" y="137" width="1" height="23" fill="#00ff00"/><rect x="382" y="144" width="11" height="12" fill="#00ff00"/><rect x="383" y="145" width="9" height="10" fill="#000"/><rect x="403" y="138" width="1" height="11" fill="#00ff00"/><rect x="398" y="144" width="11" height="2" fill="#00ff00"/><rect x="419" y="143" width="1" height="19" fill="#00ff00"/><rect x="414" y="146" width="11" height="2" fill="#00ff00"/><rect x="435" y="147" width="1" height="9" fill="#00ff00"/><rect x="430" y="147" width="11" height="2" fill="#00ff00"/><rect x="451" y="144" width="1" height="17" fill="#00ff00"/><rect x="446" y="147" width="11" height="7" fill="#00ff00"/><rect x="447" y="148" width="9" height="5" fill="#000"/><rect x="467" y="145" width="1" height="7" fill="#00ff00"/><rect x="462" y="145" width="11" height="7" fill="#00ff00"/><rect x="463" y="146" width="9" height="5" fill="#fff"/><rect x="483" y="141" width="1" height="11" fill="#00ff00"/><rect x="478" y="144" width="11" height="8" fill="#00ff00"/><rect x="479" y="145" width="9" height="6" fill="#000"/><rect x="499" y="136" width="1" height="14" fill="#00ff00"/><rect x="494" y="141" width="11" height="4" fill="#00ff00"/><rect x="495" y="142" width="9" height="2" fill="#000"/><rect x="515" y="131" width="1" height="14" fill="#00ff00"/><rect x="510" y="139" width="11" height="3" fill="#00ff00"/><rect x="511" y="140" width="9" height="1" fill="#000"/><rect x="531" y="132" width="1" height="15" fill="#00ff00"/><rect x="526" y="139" width="11" height="6" fill="#00ff00"/><rect x="527" y="140" width="9" height="4" fill="#fff"/><rect x="547" y="128" width="1" height="19" fill="#00ff00"/><rect x="542" y="132" width="11" height="13" fill="#00ff00"/><rect x="543" y="133" width="9" height="11" fill="#000"/><rect x="563" y="119" width="1" height="14" fill="#00ff00"/><rect x="558" y="121" width="11" height="11" fill="#00ff00"/><rect x="559" y="122" width="9" height="9" fill="#000"/><rect x="579" y="121" width="1" height="14" fill="#00ff00"/><rect x="574" y="121" width="11" height="7" fill="#00ff00"/><rect x="575" y="122" width="9" height="5" fill="#fff"/><rect x="595" y="99" width="1" height="29" fill="#00ff00"/><rect x="590" y="124" width="11" height="4" fill="#00ff00"/><rect x="591" y="125" width="9" height="2" fill="#000"/><rect x="611" y="105" width="1" height="37" fill="#00ff00"/><rect x="606" y="125" width="11" height="14" fill="#00ff00"/><rect x="607" y="126" width="9" height="12" fill="#fff"/><rect x="627" y="136" width="1" height="53" fill="#00ff00"/><rect x="622" y="138" width="11" height="43" fill="#00ff00"/><rect x="623" y="139" width="9" height="41" fill="#fff"/><rect x="643" y="162" width="1" height="22" fill="#00ff00"/><rect x="638" y="179" width="11" height="2" fill="#00ff00"/><rect x="659" y="146" width="1" height="46" fill="#00ff00"/><rect x="654" y="157" width="11" height="24" fill="#00ff00"/><rect x="655" y="158" width="9" height="22" fill="#000"/><rect x="675" y="156" width="1" height="40" fill="#00ff00"/><rect x="670" y="157" width="11" height="7" fill="#00ff00"/><rect x="671" y="158" width="9" height="5" fill="#fff"/><rect x="691" y="144" width="1" height="39" fill="#00ff00"/><rect x="686" y="162" width="11" height="15" fill="#00ff00"/><rect x="687" y="163" width="9" height="13" fill="#fff"/><rect x="707" y="145" width="1" height="36" fill="#00ff00"/><rect x="702" y="152" width="11" height="26" fill="#00ff00"/><rect x="703" y="153" width="9" height="24" fill="#000"/><rect x="723" y="133" width="1" height="29" fill="#00ff00"/><rect x="718" y="145" width="11" height="8" fill="#00ff00"/><rect x="719" y="146" width="9" height="6" fill="#000"/><rect x="739" y="128" width="1" height="29" fill="#00ff00"/><rect x="734" y="138" width="11" height="8" fill="#00ff00"/><rect x="735" y="139" width="9" height="6" fill="#000"/></g><rect x="2.5" y="2.5" width="971" height="200" fill="none" stroke="#fff"/><rect x="974" y="34" width="3" height="1" fill="#fff"/><rect x="974" y="67" width="3" height="1" fill="#fff"/><rect x="974" y="100" width="3" height="1" fill="#fff"/><rect x="974" y="133" width="3" height="1" fill="#fff"/><rect x="974" y="166" width="3" height="1" fill="#fff"/><rect x="974" y="199" width="3" height="1" fill="#fff"/><rect x="3" y="203" width="1" height="3" fill="#fff"/><rect x="67" y="203" width="1" height="3" fill="#fff"/><rect x="131" y="203" width="1" height="3" fill="#fff"/><rect x="195" y="203" width="1" height="3" fill="#fff"/><rect x="259" y="203" width="1" height="3" fill="#fff"/><rect x="323" y="203" width="1" height="3" fill="#fff"/><rect x="387" y="203" width="1" height="3" fill="#fff"/><rect x="451" y="203" width="1" height="3" fill="#fff"/><rect x="515" y="203" width="1" height="3" fill="#fff"/><rect x="579" y="203" width="1" height="3" fill="#fff"/><rect x="643" y="203" width="1" height="3" fill="#fff"/><rect x="707" y="203" width="1" height="3" fill="#fff"/><path d="M774 3 h8 l-4 4Z" fill="#8e9aae"/></svg>
<div class="t" style="left:352px;top:105px;font-size:9px;line-height:10px;color:#fff;letter-spacing:0.12px">EURUSD.pc,H1&nbsp; 1.07432 1.07503 1.07390 1.07463</div>
<div class="t" style="left:354px;top:161px;font-size:9px;line-height:10px;color:#fff;letter-spacing:0.12px">#37408677 buy 0.02</div>
<div class="t" style="left:354px;top:186px;font-size:9px;line-height:10px;color:#fff;letter-spacing:0.12px">#37440601 buy 0.02</div>
<div class="t" style="left:354px;top:210px;font-size:9px;line-height:10px;color:#fff;letter-spacing:0.12px">#37512344 buy 0.03</div>
<div class="t" style="left:354px;top:235px;font-size:9px;line-height:10px;color:#fff;letter-spacing:0.12px">#37517206 buy 0.03</div>
<div class="t" style="left:354px;top:248px;font-size:9px;line-height:10px;color:#fff;letter-spacing:0.12px">#37530229 sell 0.01</div>
<div class="t" style="left:354px;top:258px;font-size:9px;line-height:10px;color:#fff;letter-spacing:0.12px">#37530896 buy 0.03</div>
<div class="t" style="left:354px;top:272px;font-size:9px;line-height:10px;color:#fff;letter-spacing:0.12px">#37530229 tp</div>
<div class="t" style="left:1324px;top:128px;font-size:9px;line-height:10px;color:#fff;letter-spacing:0.12px;letter-spacing:0px">1.07895</div>
<div class="t" style="left:1324px;top:161px;font-size:9px;line-height:10px;color:#fff;letter-spacing:0.12px;letter-spacing:0px">1.07755</div>
<div class="t" style="left:1324px;top:194px;font-size:9px;line-height:10px;color:#fff;letter-spacing:0.12px;letter-spacing:0px">1.07620</div>
<div class="t" style="left:1324px;top:227px;font-size:9px;line-height:10px;color:#fff;letter-spacing:0.12px;letter-spacing:0px">1.07485</div>
<div class="t" style="left:1324px;top:260px;font-size:9px;line-height:10px;color:#fff;letter-spacing:0.12px;letter-spacing:0px">1.07345</div>
<div class="t" style="left:1324px;top:293px;font-size:9px;line-height:10px;color:#fff;letter-spacing:0.12px;letter-spacing:0px">1.07210</div>
<div style="position:absolute;left:1320px;top:232px;width:41px;height:11px;background:#fff"></div>
<div class="t" style="left:1324px;top:232px;font-size:9px;line-height:10px;color:#000;letter-spacing:0px">1.07463</div>
<div class="t" style="left:347px;top:306px;font-size:9px;line-height:10px;color:#fff;letter-spacing:0.12px">2 Feb 2024</div>
<div class="t" style="left:411px;top:306px;font-size:9px;line-height:10px;color:#fff;letter-spacing:0.12px">5 Feb 00:00</div>
<div class="t" style="left:475px;top:306px;font-size:9px;line-height:10px;color:#fff;letter-spacing:0.12px">5 Feb 04:00</div>
<div class="t" style="left:539px;top:306px;font-size:9px;line-height:10px;color:#fff;letter-spacing:0.12px">5 Feb 08:00</div>
<div class="t" style="left:603px;top:306px;font-size:9px;line-height:10px;color:#fff;letter-spacing:0.12px">5 Feb 12:00</div>
<div class="t" style="left:667px;top:306px;font-size:9px;line-height:10px;color:#fff;letter-spacing:0.12px">5 Feb 16:00</div>
<div class="t" style="left:731px;top:306px;font-size:9px;line-height:10px;color:#fff;letter-spacing:0.12px">5 Feb 20:00</div>
<div class="t" style="left:795px;top:306px;font-size:9px;line-height:10px;color:#fff;letter-spacing:0.12px">6 Feb 00:00</div>
<div class="t" style="left:859px;top:306px;font-size:9px;line-height:10px;color:#fff;letter-spacing:0.12px">6 Feb 04:00</div>
<div class="t" style="left:923px;top:306px;font-size:9px;line-height:10px;color:#fff;letter-spacing:0.12px">6 Feb 08:00</div>
<div class="t" style="left:987px;top:306px;font-size:9px;line-height:10px;color:#fff;letter-spacing:0.12px">6 Feb 12:00</div>
<div class="t" style="left:1051px;top:306px;font-size:9px;line-height:10px;color:#fff;letter-spacing:0.12px">6 Feb 16:00</div>
<div style="position:absolute;left:345px;top:324px;width:1021px;height:1px;background:#000"></div>
<div style="position:absolute;left:437px;top:324px;width:100px;height:19px;background:#fff;border-left:1px solid #000;border-right:1px solid #000;border-bottom:1px solid #000"></div>
<div class="t" style="left:360px;top:327px;font-size:12px;color:#7f7f7f;letter-spacing:-0.6px">XAUUSD.,H1</div>
<div class="t" style="left:448px;top:327px;font-size:12px;letter-spacing:-0.75px">EURUSD.pc,H1</div>
<svg style="left:1332px;top:329px;" width="6" height="9" viewBox="0 0 6 9"><path d="M5 0 V8 L0 4Z" fill="#a0a0a0"/></svg>
<svg style="left:1351px;top:329px;" width="6" height="9" viewBox="0 0 6 9"><path d="M0 0 V8 L5 4Z" fill="#a0a0a0"/></svg>
<div style="position:absolute;left:344px;top:343px;width:1022px;height:1px;background:#a0a0a0"></div>
<div style="position:absolute;left:342px;top:99px;width:1px;height:242px;background:#fff"></div>
<div style="position:absolute;left:343px;top:98px;width:2px;height:245px;background:linear-gradient(to right,#a0a0a0,#5a5a5a)"></div>
<div style="position:absolute;left:342px;top:322px;width:1024px;height:2px;background:#fafafa"></div>
<div style="position:absolute;left:0px;top:343px;width:1366px;height:1px;background:#a0a0a0"></div>
<div style="position:absolute;left:0px;top:344px;width:1366px;height:360px;background:#f0f0f0"></div>
<svg style="left:4px;top:351px;" width="7" height="6" viewBox="0 0 7 6"><path d="M0.5 0.5 l6 5 M6.5 0.5 l-6 5" stroke="#000" stroke-width="1.7"/></svg>
<div style="position:absolute;left:1px;top:362px;width:13px;height:339px;background:#b9d1ea"></div>
<div class="t" style="left:2px;top:700px;width:56px;height:13px;transform-origin:0 0;transform:rotate(-90deg);font-size:11.5px;line-height:13px;letter-spacing:-0.35px">Terminal</div>
<div style="position:absolute;left:15px;top:348px;width:1330px;height:325px;background:#fff;border-left:1px solid #a0a0a0;border-top:1px solid #a0a0a0"></div>
<div style="position:absolute;left:125px;top:349px;width:1px;height:24px;background:#e5e5e5"></div>
<div style="position:absolute;left:312px;top:349px;width:1px;height:24px;background:#e5e5e5"></div>
<div style="position:absolute;left:397px;top:349px;width:1px;height:24px;background:#e5e5e5"></div>
<div style="position:absolute;left:465px;top:349px;width:1px;height:24px;background:#e5e5e5"></div>
<div style="position:absolute;left:550px;top:349px;width:1px;height:24px;background:#e5e5e5"></div>
<div style="position:absolute;left:635px;top:349px;width:1px;height:24px;background:#e5e5e5"></div>
<div style="position:absolute;left:720px;top:349px;width:1px;height:24px;background:#e5e5e5"></div>
<div style="position:absolute;left:805px;top:349px;width:1px;height:24px;background:#e5e5e5"></div>
<div style="position:absolute;left:992px;top:349px;width:1px;height:24px;background:#e5e5e5"></div>
<div style="position:absolute;left:1077px;top:349px;width:1px;height:24px;background:#e5e5e5"></div>
<div style="position:absolute;left:1162px;top:349px;width:1px;height:24px;background:#e5e5e5"></div>
<div style="position:absolute;left:1247px;top:349px;width:1px;height:24px;background:#e5e5e5"></div>
<div style="position:absolute;left:16px;top:373px;width:1329px;height:1px;background:#a0a0a0"></div>
<div class="t" style="left:22px;top:354px;font-size:12px;letter-spacing:-0.12px">Order</div>
<div class="t" style="right:1079px;top:354px;font-size:12px;letter-spacing:-0.12px">Time</div>
<svg style="left:299px;top:357px;" width="4" height="8" viewBox="0 0 4 8"><path d="M0.5 7.5 L3.5 0.5" stroke="#888"/></svg>
<div class="t" style="right:972px;top:354px;font-size:12px;letter-spacing:-0.12px">Type</div>
<div class="t" style="right:905px;top:354px;font-size:12px;letter-spacing:-0.12px">Size</div>
<div class="t" style="right:819px;top:354px;font-size:12px;letter-spacing:-0.12px">Symbol</div>
<div class="t" style="right:735px;top:354px;font-size:12px;letter-spacing:-0.12px">Price</div>
<div class="t" style="right:650px;top:354px;font-size:12px;letter-spacing:-0.12px">S / L</div>
<div class="t" style="right:565px;top:354px;font-size:12px;letter-spacing:-0.12px">T / P</div>
<div class="t" style="right:378px;top:354px;font-size:12px;letter-spacing:-0.12px">Time</div>
<div class="t" style="right:293px;top:354px;font-size:12px;letter-spacing:-0.12px">Price</div>
<div class="t" style="right:209px;top:354px;font-size:12px;letter-spacing:-0.12px">Commission</div>
<div class="t" style="right:123px;top:354px;font-size:12px;letter-spacing:-0.12px">Swap</div>
<div class="t" style="right:26px;top:354px;font-size:12px;letter-spacing:-0.12px">Profit</div>
<div style="position:absolute;left:16px;top:374px;width:1329px;height:19px;background:#e9e9e9"></div>
<div style="position:absolute;left:16px;top:393px;width:1329px;height:1px;background:#d4d4d4"></div>
<div style="position:absolute;left:124px;top:373px;width:1px;height:20px;background:#d4d4d4"></div>
<div style="position:absolute;left:311px;top:373px;width:1px;height:20px;background:#d4d4d4"></div>
<div style="position:absolute;left:396px;top:373px;width:1px;height:20px;background:#d4d4d4"></div>
<div style="position:absolute;left:464px;top:373px;width:1px;height:20px;background:#d4d4d4"></div>
<div style="position:absolute;left:549px;top:373px;width:1px;height:20px;background:#d4d4d4"></div>
<div style="position:absolute;left:634px;top:373px;width:1px;height:20px;background:#d4d4d4"></div>
<div style="position:absolute;left:719px;top:373px;width:1px;height:20px;background:#d4d4d4"></div>
<div style="position:absolute;left:804px;top:373px;width:1px;height:20px;background:#d4d4d4"></div>
<div style="position:absolute;left:991px;top:373px;width:1px;height:20px;background:#d4d4d4"></div>
<div style="position:absolute;left:1076px;top:373px;width:1px;height:20px;background:#d4d4d4"></div>
<div style="position:absolute;left:1161px;top:373px;width:1px;height:20px;background:#d4d4d4"></div>
<div style="position:absolute;left:1246px;top:373px;width:1px;height:20px;background:#d4d4d4"></div>
<svg style="left:19px;top:376px;" width="14" height="15" viewBox="0 0 14 15"><path d="M0.5 0.5 h8 l3 3 v10 h-11Z" fill="url(#gd)" stroke="#555"/><path d="M8.5 0.5 v3 h3" fill="none" stroke="#555"/><circle cx="10.5" cy="11.5" r="3.2" fill="url(#gr)" stroke="#a8300c" stroke-width=".7"/></svg>
<div class="t" style="left:38px;top:376px;font-size:12px;letter-spacing:-0.55px">37409265</div>
<div class="t" style="right:1057px;top:376px;font-size:12px;letter-spacing:-0.55px">2024.02.05 01:14:26</div>
<div class="t" style="right:972px;top:376px;font-size:12px;letter-spacing:-0.55px">sell</div>
<div class="t" style="right:905px;top:376px;font-size:12px;letter-spacing:-0.55px">0.01</div>
<div class="t" style="right:819px;top:376px;font-size:12px;letter-spacing:-0.55px">nzdusd.pc</div>
<div class="t" style="right:735px;top:376px;font-size:12px;letter-spacing:-0.55px">0.60497</div>
<div class="t" style="right:650px;top:376px;font-size:12px;letter-spacing:-0.55px">0.00000</div>
<div class="t" style="right:565px;top:376px;font-size:12px;letter-spacing:-0.55px">0.60397</div>
<div class="t" style="right:378px;top:376px;font-size:12px;letter-spacing:-0.55px">2024.02.05 05:46:12</div>
<div class="t" style="right:293px;top:376px;font-size:12px;letter-spacing:-0.55px">0.60714</div>
<div class="t" style="right:208px;top:376px;font-size:12px;letter-spacing:-0.55px">-0.06</div>
<div class="t" style="right:123px;top:376px;font-size:12px;letter-spacing:-0.55px">0.00</div>
<div class="t" style="right:26px;top:376px;font-size:12px;letter-spacing:-0.55px">-2.17</div>
<div style="position:absolute;left:16px;top:394px;width:1329px;height:19px;background:#fff"></div>
<div style="position:absolute;left:16px;top:413px;width:1329px;height:1px;background:#d4d4d4"></div>
<div style="position:absolute;left:124px;top:393px;width:1px;height:20px;background:#d4d4d4"></div>
<div style="position:absolute;left:311px;top:393px;width:1px;height:20px;background:#d4d4d4"></div>
<div style="position:absolute;left:396px;top:393px;width:1px;height:20px;background:#d4d4d4"></div>
<div style="position:absolute;left:464px;top:393px;width:1px;height:20px;background:#d4d4d4"></div>
<div style="position:absolute;left:549px;top:393px;width:1px;height:20px;background:#d4d4d4"></div>
<div style="position:absolute;left:634px;top:393px;width:1px;height:20px;background:#d4d4d4"></div>
<div style="position:absolute;left:719px;top:393px;width:1px;height:20px;background:#d4d4d4"></div>
<div style="position:absolute;left:804px;top:393px;width:1px;height:20px;background:#d4d4d4"></div>
<div style="position:absolute;left:991px;top:393px;width:1px;height:20px;background:#d4d4d4"></div>
<div style="position:absolute;left:1076px;top:393px;width:1px;height:20px;background:#d4d4d4"></div>
<div style="position:absolute;left:1161px;top:393px;width:1px;height:20px;background:#d4d4d4"></div>
<div style="position:absolute;left:1246px;top:393px;width:1px;height:20px;background:#d4d4d4"></div>
<div style="position:absolute;left:721px;top:394px;width:82px;height:18px;background:#62f062"></div>
<svg style="left:19px;top:396px;" width="14" height="15" viewBox="0 0 14 15"><path d="M0.5 0.5 h8 l3 3 v10 h-11Z" fill="url(#gd)" stroke="#555"/><path d="M8.5 0.5 v3 h3" fill="none" stroke="#555"/><circle cx="10.5" cy="11.5" r="3.2" fill="url(#gr)" stroke="#a8300c" stroke-width=".7"/></svg>
<div class="t" style="left:38px;top:396px;font-size:12px;letter-spacing:-0.55px">37413764</div>
<div class="t" style="right:1057px;top:396px;font-size:12px;letter-spacing:-0.55px">2024.02.05 02:37:05</div>
<div class="t" style="right:972px;top:396px;font-size:12px;letter-spacing:-0.55px">sell</div>
<div class="t" style="right:905px;top:396px;font-size:12px;letter-spacing:-0.55px">0.01</div>
<div class="t" style="right:819px;top:396px;font-size:12px;letter-spacing:-0.55px">eurusd.pc</div>
<div class="t" style="right:735px;top:396px;font-size:12px;letter-spacing:-0.55px">1.07676</div>
<div class="t" style="right:650px;top:396px;font-size:12px;letter-spacing:-0.55px">0.00000</div>
<div class="t" style="right:565px;top:396px;font-size:12px;letter-spacing:-0.55px">1.07577</div>
<div class="t" style="right:378px;top:396px;font-size:12px;letter-spacing:-0.55px">2024.02.05 11:50:04</div>
<div class="t" style="right:293px;top:396px;font-size:12px;letter-spacing:-0.55px">1.07576</div>
<div class="t" style="right:208px;top:396px;font-size:12px;letter-spacing:-0.55px">-0.06</div>
<div class="t" style="right:123px;top:396px;font-size:12px;letter-spacing:-0.55px">0.00</div>
<div class="t" style="right:26px;top:396px;font-size:12px;letter-spacing:-0.55px">1.00</div>
<div style="position:absolute;left:16px;top:414px;width:1329px;height:19px;background:#e9e9e9"></div>
<div style="position:absolute;left:16px;top:433px;width:1329px;height:1px;background:#d4d4d4"></div>
<div style="position:absolute;left:124px;top:413px;width:1px;height:20px;background:#d4d4d4"></div>
<div style="position:absolute;left:311px;top:413px;width:1px;height:20px;background:#d4d4d4"></div>
<div style="position:absolute;left:396px;top:413px;width:1px;height:20px;background:#d4d4d4"></div>
<div style="position:absolute;left:464px;top:413px;width:1px;height:20px;background:#d4d4d4"></div>
<div style="position:absolute;left:549px;top:413px;width:1px;height:20px;background:#d4d4d4"></div>
<div style="position:absolute;left:634px;top:413px;width:1px;height:20px;background:#d4d4d4"></div>
<div style="position:absolute;left:719px;top:413px;width:1px;height:20px;background:#d4d4d4"></div>
<div style="position:absolute;left:804px;top:413px;width:1px;height:20px;background:#d4d4d4"></div>
<div style="position:absolute;left:991px;top:413px;width:1px;height:20px;background:#d4d4d4"></div>
<div style="position:absolute;left:1076px;top:413px;width:1px;height:20px;background:#d4d4d4"></div>
<div style="position:absolute;left:1161px;top:413px;width:1px;height:20px;background:#d4d4d4"></div>
<div style="position:absolute;left:1246px;top:413px;width:1px;height:20px;background:#d4d4d4"></div>
<div style="position:absolute;left:721px;top:414px;width:82px;height:18px;background:#62f062"></div>
<svg style="left:19px;top:416px;" width="14" height="15" viewBox="0 0 14 15"><path d="M0.5 0.5 h8 l3 3 v10 h-11Z" fill="url(#gd)" stroke="#555"/><path d="M8.5 0.5 v3 h3" fill="none" stroke="#555"/><circle cx="10.5" cy="11.5" r="3.2" fill="url(#gr)" stroke="#a8300c" stroke-width=".7"/></svg>
<div class="t" style="left:38px;top:416px;font-size:12px;letter-spacing:-0.55px">37423861</div>
<div class="t" style="right:1057px;top:416px;font-size:12px;letter-spacing:-0.55px">2024.02.05 05:46:13</div>
<div class="t" style="right:972px;top:416px;font-size:12px;letter-spacing:-0.55px">sell</div>
<div class="t" style="right:905px;top:416px;font-size:12px;letter-spacing:-0.55px">0.01</div>
<div class="t" style="right:819px;top:416px;font-size:12px;letter-spacing:-0.55px">nzdusd.pc</div>
<div class="t" style="right:735px;top:416px;font-size:12px;letter-spacing:-0.55px">0.60708</div>
<div class="t" style="right:650px;top:416px;font-size:12px;letter-spacing:-0.55px">0.00000</div>
<div class="t" style="right:565px;top:416px;font-size:12px;letter-spacing:-0.55px">0.60608</div>
<div class="t" style="right:378px;top:416px;font-size:12px;letter-spacing:-0.55px">2024.02.05 12:20:57</div>
<div class="t" style="right:293px;top:416px;font-size:12px;letter-spacing:-0.55px">0.60607</div>
<div class="t" style="right:208px;top:416px;font-size:12px;letter-spacing:-0.55px">-0.06</div>
<div class="t" style="right:123px;top:416px;font-size:12px;letter-spacing:-0.55px">0.00</div>
<div class="t" style="right:26px;top:416px;font-size:12px;letter-spacing:-0.55px">1.01</div>
<div style="position:absolute;left:16px;top:434px;width:1329px;height:19px;background:#fff"></div>
<div style="position:absolute;left:16px;top:453px;width:1329px;height:1px;background:#d4d4d4"></div>
<div style="position:absolute;left:124px;top:433px;width:1px;height:20px;background:#d4d4d4"></div>
<div style="position:absolute;left:311px;top:433px;width:1px;height:20px;background:#d4d4d4"></div>
<div style="position:absolute;left:396px;top:433px;width:1px;height:20px;background:#d4d4d4"></div>
<div style="position:absolute;left:464px;top:433px;width:1px;height:20px;background:#d4d4d4"></div>
<div style="position:absolute;left:549px;top:433px;width:1px;height:20px;background:#d4d4d4"></div>
<div style="position:absolute;left:634px;top:433px;width:1px;height:20px;background:#d4d4d4"></div>
<div style="position:absolute;left:719px;top:433px;width:1px;height:20px;background:#d4d4d4"></div>
<div style="position:absolute;left:804px;top:433px;width:1px;height:20px;background:#d4d4d4"></div>
<div style="position:absolute;left:991px;top:433px;width:1px;height:20px;background:#d4d4d4"></div>
<div style="position:absolute;left:1076px;top:433px;width:1px;height:20px;background:#d4d4d4"></div>
<div style="position:absolute;left:1161px;top:433px;width:1px;height:20px;background:#d4d4d4"></div>
<div style="position:absolute;left:1246px;top:433px;width:1px;height:20px;background:#d4d4d4"></div>
<div style="position:absolute;left:721px;top:434px;width:82px;height:18px;background:#62f062"></div>
<svg style="left:19px;top:436px;" width="14" height="15" viewBox="0 0 14 15"><path d="M0.5 0.5 h8 l3 3 v10 h-11Z" fill="url(#gd)" stroke="#555"/><path d="M8.5 0.5 v3 h3" fill="none" stroke="#555"/><circle cx="10.5" cy="11.5" r="3.2" fill="url(#gr)" stroke="#a8300c" stroke-width=".7"/></svg>
<div class="t" style="left:38px;top:436px;font-size:12px;letter-spacing:-0.55px">37442812</div>
<div class="t" style="right:1057px;top:436px;font-size:12px;letter-spacing:-0.55px">2024.02.05 11:50:08</div>
<div class="t" style="right:972px;top:436px;font-size:12px;letter-spacing:-0.55px">sell</div>
<div class="t" style="right:905px;top:436px;font-size:12px;letter-spacing:-0.55px">0.01</div>
<div class="t" style="right:819px;top:436px;font-size:12px;letter-spacing:-0.55px">eurusd.pc</div>
<div class="t" style="right:735px;top:436px;font-size:12px;letter-spacing:-0.55px">1.07571</div>
<div class="t" style="right:650px;top:436px;font-size:12px;letter-spacing:-0.55px">0.00000</div>
<div class="t" style="right:565px;top:436px;font-size:12px;letter-spacing:-0.55px">1.07473</div>
<div class="t" style="right:378px;top:436px;font-size:12px;letter-spacing:-0.55px">2024.02.05 13:03:48</div>
<div class="t" style="right:293px;top:436px;font-size:12px;letter-spacing:-0.55px">1.07473</div>
<div class="t" style="right:208px;top:436px;font-size:12px;letter-spacing:-0.55px">-0.06</div>
<div class="t" style="right:123px;top:436px;font-size:12px;letter-spacing:-0.55px">0.00</div>
<div class="t" style="right:26px;top:436px;font-size:12px;letter-spacing:-0.55px">0.98</div>
<div style="position:absolute;left:16px;top:454px;width:1329px;height:19px;background:#e9e9e9"></div>
<div style="position:absolute;left:16px;top:473px;width:1329px;height:1px;background:#d4d4d4"></div>
<div style="position:absolute;left:124px;top:453px;width:1px;height:20px;background:#d4d4d4"></div>
<div style="position:absolute;left:311px;top:453px;width:1px;height:20px;background:#d4d4d4"></div>
<div style="position:absolute;left:396px;top:453px;width:1px;height:20px;background:#d4d4d4"></div>
<div style="position:absolute;left:464px;top:453px;width:1px;height:20px;background:#d4d4d4"></div>
<div style="position:absolute;left:549px;top:453px;width:1px;height:20px;background:#d4d4d4"></div>
<div style="position:absolute;left:634px;top:453px;width:1px;height:20px;background:#d4d4d4"></div>
<div style="position:absolute;left:719px;top:453px;width:1px;height:20px;background:#d4d4d4"></div>
<div style="position:absolute;left:804px;top:453px;width:1px;height:20px;background:#d4d4d4"></div>
<div style="position:absolute;left:991px;top:453px;width:1px;height:20px;background:#d4d4d4"></div>
<div style="position:absolute;left:1076px;top:453px;width:1px;height:20px;background:#d4d4d4"></div>
<div style="position:absolute;left:1161px;top:453px;width:1px;height:20px;background:#d4d4d4"></div>
<div style="position:absolute;left:1246px;top:453px;width:1px;height:20px;background:#d4d4d4"></div>
<div style="position:absolute;left:721px;top:454px;width:82px;height:18px;background:#62f062"></div>
<svg style="left:19px;top:456px;" width="14" height="15" viewBox="0 0 14 15"><path d="M0.5 0.5 h8 l3 3 v10 h-11Z" fill="url(#gd)" stroke="#555"/><path d="M8.5 0.5 v3 h3" fill="none" stroke="#555"/><circle cx="10.5" cy="11.5" r="3.2" fill="url(#gr)" stroke="#a8300c" stroke-width=".7"/></svg>
<div class="t" style="left:38px;top:456px;font-size:12px;letter-spacing:-0.55px">37452861</div>
<div class="t" style="right:1057px;top:456px;font-size:12px;letter-spacing:-0.55px">2024.02.05 12:20:58</div>
<div class="t" style="right:972px;top:456px;font-size:12px;letter-spacing:-0.55px">sell</div>
<div class="t" style="right:905px;top:456px;font-size:12px;letter-spacing:-0.55px">0.01</div>
<div class="t" style="right:819px;top:456px;font-size:12px;letter-spacing:-0.55px">nzdusd.pc</div>
<div class="t" style="right:735px;top:456px;font-size:12px;letter-spacing:-0.55px">0.60554</div>
<div class="t" style="right:650px;top:456px;font-size:12px;letter-spacing:-0.55px">0.00000</div>
<div class="t" style="right:565px;top:456px;font-size:12px;letter-spacing:-0.55px">0.60454</div>
<div class="t" style="right:378px;top:456px;font-size:12px;letter-spacing:-0.55px">2024.02.05 17:00:00</div>
<div class="t" style="right:293px;top:456px;font-size:12px;letter-spacing:-0.55px">0.60454</div>
<div class="t" style="right:208px;top:456px;font-size:12px;letter-spacing:-0.55px">-0.06</div>
<div class="t" style="right:123px;top:456px;font-size:12px;letter-spacing:-0.55px">0.00</div>
<div class="t" style="right:26px;top:456px;font-size:12px;letter-spacing:-0.55px">1.48</div>
<div style="position:absolute;left:16px;top:474px;width:1329px;height:19px;background:#fff"></div>
<div style="position:absolute;left:16px;top:493px;width:1329px;height:1px;background:#d4d4d4"></div>
<div style="position:absolute;left:124px;top:473px;width:1px;height:20px;background:#d4d4d4"></div>
<div style="position:absolute;left:311px;top:473px;width:1px;height:20px;background:#d4d4d4"></div>
<div style="position:absolute;left:396px;top:473px;width:1px;height:20px;background:#d4d4d4"></div>
<div style="position:absolute;left:464px;top:473px;width:1px;height:20px;background:#d4d4d4"></div>
<div style="position:absolute;left:549px;top:473px;width:1px;height:20px;background:#d4d4d4"></div>
<div style="position:absolute;left:634px;top:473px;width:1px;height:20px;background:#d4d4d4"></div>
<div style="position:absolute;left:719px;top:473px;width:1px;height:20px;background:#d4d4d4"></div>
<div style="position:absolute;left:804px;top:473px;width:1px;height:20px;background:#d4d4d4"></div>
<div style="position:absolute;left:991px;top:473px;width:1px;height:20px;background:#d4d4d4"></div>
<div style="position:absolute;left:1076px;top:473px;width:1px;height:20px;background:#d4d4d4"></div>
<div style="position:absolute;left:1161px;top:473px;width:1px;height:20px;background:#d4d4d4"></div>
<div style="position:absolute;left:1246px;top:473px;width:1px;height:20px;background:#d4d4d4"></div>
<div style="position:absolute;left:721px;top:474px;width:82px;height:18px;background:#62f062"></div>
<svg style="left:19px;top:476px;" width="14" height="15" viewBox="0 0 14 15"><path d="M0.5 0.5 h8 l3 3 v10 h-11Z" fill="url(#gd)" stroke="#555"/><path d="M8.5 0.5 v3 h3" fill="none" stroke="#555"/><circle cx="10.5" cy="11.5" r="3.2" fill="url(#gr)" stroke="#a8300c" stroke-width=".7"/></svg>
<div class="t" style="left:38px;top:476px;font-size:12px;letter-spacing:-0.55px">37458431</div>
<div class="t" style="right:1057px;top:476px;font-size:12px;letter-spacing:-0.55px">2024.02.05 13:03:49</div>
<div class="t" style="right:972px;top:476px;font-size:12px;letter-spacing:-0.55px">sell</div>
<div class="t" style="right:905px;top:476px;font-size:12px;letter-spacing:-0.55px">0.01</div>
<div class="t" style="right:819px;top:476px;font-size:12px;letter-spacing:-0.55px">eurusd.pc</div>
<div class="t" style="right:735px;top:476px;font-size:12px;letter-spacing:-0.55px">1.07471</div>
<div class="t" style="right:650px;top:476px;font-size:12px;letter-spacing:-0.55px">0.00000</div>
<div class="t" style="right:565px;top:476px;font-size:12px;letter-spacing:-0.55px">1.07372</div>
<div class="t" style="right:378px;top:476px;font-size:12px;letter-spacing:-0.55px">2024.02.05 15:57:45</div>
<div class="t" style="right:293px;top:476px;font-size:12px;letter-spacing:-0.55px">1.07372</div>
<div class="t" style="right:208px;top:476px;font-size:12px;letter-spacing:-0.55px">-0.06</div>
<div class="t" style="right:123px;top:476px;font-size:12px;letter-spacing:-0.55px">0.00</div>
<div class="t" style="right:26px;top:476px;font-size:12px;letter-spacing:-0.55px">1.03</div>
<div style="position:absolute;left:16px;top:494px;width:1329px;height:19px;background:#e9e9e9"></div>
<div style="position:absolute;left:16px;top:513px;width:1329px;height:1px;background:#d4d4d4"></div>
<div style="position:absolute;left:124px;top:493px;width:1px;height:20px;background:#d4d4d4"></div>
<div style="position:absolute;left:311px;top:493px;width:1px;height:20px;background:#d4d4d4"></div>
<div style="position:absolute;left:396px;top:493px;width:1px;height:20px;background:#d4d4d4"></div>
<div style="position:absolute;left:464px;top:493px;width:1px;height:20px;background:#d4d4d4"></div>
<div style="position:absolute;left:549px;top:493px;width:1px;height:20px;background:#d4d4d4"></div>
<div style="position:absolute;left:634px;top:493px;width:1px;height:20px;background:#d4d4d4"></div>
<div style="position:absolute;left:719px;top:493px;width:1px;height:20px;background:#d4d4d4"></div>
<div style="position:absolute;left:804px;top:493px;width:1px;height:20px;background:#d4d4d4"></div>
<div style="position:absolute;left:991px;top:493px;width:1px;height:20px;background:#d4d4d4"></div>
<div style="position:absolute;left:1076px;top:493px;width:1px;height:20px;background:#d4d4d4"></div>
<div style="position:absolute;left:1161px;top:493px;width:1px;height:20px;background:#d4d4d4"></div>
<div style="position:absolute;left:1246px;top:493px;width:1px;height:20px;background:#d4d4d4"></div>
<svg style="left:19px;top:496px;" width="14" height="15" viewBox="0 0 14 15"><path d="M0.5 0.5 h8 l3 3 v10 h-11Z" fill="url(#gd)" stroke="#555"/><path d="M8.5 0.5 v3 h3" fill="none" stroke="#555"/><circle cx="10.5" cy="11.5" r="3.2" fill="url(#gb)" stroke="#0a5a9a" stroke-width=".7"/></svg>
<div class="t" style="left:38px;top:496px;font-size:12px;letter-spacing:-0.55px">37461196</div>
<div class="t" style="right:1057px;top:496px;font-size:12px;letter-spacing:-0.55px">2024.02.05 15:11:48</div>
<div class="t" style="right:972px;top:496px;font-size:12px;letter-spacing:-0.55px">buy</div>
<div class="t" style="right:905px;top:496px;font-size:12px;letter-spacing:-0.55px">0.02</div>
<div class="t" style="right:819px;top:496px;font-size:12px;letter-spacing:-0.55px">nzdusd.pc</div>
<div class="t" style="right:735px;top:496px;font-size:12px;letter-spacing:-0.55px">0.60467</div>
<div class="t" style="right:650px;top:496px;font-size:12px;letter-spacing:-0.55px">0.00000</div>
<div class="t" style="right:565px;top:496px;font-size:12px;letter-spacing:-0.55px">0.00000</div>
<div class="t" style="right:378px;top:496px;font-size:12px;letter-spacing:-0.55px">2024.02.05 20:13:50</div>
<div class="t" style="right:293px;top:496px;font-size:12px;letter-spacing:-0.55px">0.60582</div>
<div class="t" style="right:208px;top:496px;font-size:12px;letter-spacing:-0.55px">-0.12</div>
<div class="t" style="right:123px;top:496px;font-size:12px;letter-spacing:-0.55px">0.00</div>
<div class="t" style="right:26px;top:496px;font-size:12px;letter-spacing:-0.55px">1.14</div>
<div style="position:absolute;left:16px;top:514px;width:1329px;height:19px;background:#fff"></div>
<div style="position:absolute;left:16px;top:533px;width:1329px;height:1px;background:#d4d4d4"></div>
<div style="position:absolute;left:124px;top:513px;width:1px;height:20px;background:#d4d4d4"></div>
<div style="position:absolute;left:311px;top:513px;width:1px;height:20px;background:#d4d4d4"></div>
<div style="position:absolute;left:396px;top:513px;width:1px;height:20px;background:#d4d4d4"></div>
<div style="position:absolute;left:464px;top:513px;width:1px;height:20px;background:#d4d4d4"></div>
<div style="position:absolute;left:549px;top:513px;width:1px;height:20px;background:#d4d4d4"></div>
<div style="position:absolute;left:634px;top:513px;width:1px;height:20px;background:#d4d4d4"></div>
<div style="position:absolute;left:719px;top:513px;width:1px;height:20px;background:#d4d4d4"></div>
<div style="position:absolute;left:804px;top:513px;width:1px;height:20px;background:#d4d4d4"></div>
<div style="position:absolute;left:991px;top:513px;width:1px;height:20px;background:#d4d4d4"></div>
<div style="position:absolute;left:1076px;top:513px;width:1px;height:20px;background:#d4d4d4"></div>
<div style="position:absolute;left:1161px;top:513px;width:1px;height:20px;background:#d4d4d4"></div>
<div style="position:absolute;left:1246px;top:513px;width:1px;height:20px;background:#d4d4d4"></div>
<div style="position:absolute;left:721px;top:514px;width:82px;height:18px;background:#62f062"></div>
<svg style="left:19px;top:516px;" width="14" height="15" viewBox="0 0 14 15"><path d="M0.5 0.5 h8 l3 3 v10 h-11Z" fill="url(#gd)" stroke="#555"/><path d="M8.5 0.5 v3 h3" fill="none" stroke="#555"/><circle cx="10.5" cy="11.5" r="3.2" fill="url(#gr)" stroke="#a8300c" stroke-width=".7"/></svg>
<div class="t" style="left:38px;top:516px;font-size:12px;letter-spacing:-0.55px">37463637</div>
<div class="t" style="right:1057px;top:516px;font-size:12px;letter-spacing:-0.55px">2024.02.05 15:57:45</div>
<div class="t" style="right:972px;top:516px;font-size:12px;letter-spacing:-0.55px">sell</div>
<div class="t" style="right:905px;top:516px;font-size:12px;letter-spacing:-0.55px">0.01</div>
<div class="t" style="right:819px;top:516px;font-size:12px;letter-spacing:-0.55px">eurusd.pc</div>
<div class="t" style="right:735px;top:516px;font-size:12px;letter-spacing:-0.55px">1.07372</div>
<div class="t" style="right:650px;top:516px;font-size:12px;letter-spacing:-0.55px">0.00000</div>
<div class="t" style="right:565px;top:516px;font-size:12px;letter-spacing:-0.55px">1.07273</div>
<div class="t" style="right:378px;top:516px;font-size:12px;letter-spacing:-0.55px">2024.02.05 17:01:30</div>
<div class="t" style="right:293px;top:516px;font-size:12px;letter-spacing:-0.55px">1.07272</div>
<div class="t" style="right:208px;top:516px;font-size:12px;letter-spacing:-0.55px">-0.06</div>
<div class="t" style="right:123px;top:516px;font-size:12px;letter-spacing:-0.55px">0.00</div>
<div class="t" style="right:26px;top:516px;font-size:12px;letter-spacing:-0.55px">1.00</div>
<div style="position:absolute;left:16px;top:534px;width:1329px;height:19px;background:#e9e9e9"></div>
<div style="position:absolute;left:16px;top:553px;width:1329px;height:1px;background:#d4d4d4"></div>
<div style="position:absolute;left:124px;top:533px;width:1px;height:20px;background:#d4d4d4"></div>
<div style="position:absolute;left:311px;top:533px;width:1px;height:20px;background:#d4d4d4"></div>
<div style="position:absolute;left:396px;top:533px;width:1px;height:20px;background:#d4d4d4"></div>
<div style="position:absolute;left:464px;top:533px;width:1px;height:20px;background:#d4d4d4"></div>
<div style="position:absolute;left:549px;top:533px;width:1px;height:20px;background:#d4d4d4"></div>
<div style="position:absolute;left:634px;top:533px;width:1px;height:20px;background:#d4d4d4"></div>
<div style="position:absolute;left:719px;top:533px;width:1px;height:20px;background:#d4d4d4"></div>
<div style="position:absolute;left:804px;top:533px;width:1px;height:20px;background:#d4d4d4"></div>
<div style="position:absolute;left:991px;top:533px;width:1px;height:20px;background:#d4d4d4"></div>
<div style="position:absolute;left:1076px;top:533px;width:1px;height:20px;background:#d4d4d4"></div>
<div style="position:absolute;left:1161px;top:533px;width:1px;height:20px;background:#d4d4d4"></div>
<div style="position:absolute;left:1246px;top:533px;width:1px;height:20px;background:#d4d4d4"></div>
<svg style="left:19px;top:536px;" width="14" height="15" viewBox="0 0 14 15"><path d="M0.5 0.5 h8 l3 3 v10 h-11Z" fill="url(#gd)" stroke="#555"/><path d="M8.5 0.5 v3 h3" fill="none" stroke="#555"/><circle cx="10.5" cy="11.5" r="3.2" fill="url(#gr)" stroke="#a8300c" stroke-width=".7"/></svg>
<div class="t" style="left:38px;top:536px;font-size:12px;letter-spacing:-0.55px">37469205</div>
<div class="t" style="right:1057px;top:536px;font-size:12px;letter-spacing:-0.55px">2024.02.05 17:00:07</div>
<div class="t" style="right:972px;top:536px;font-size:12px;letter-spacing:-0.55px">sell</div>
<div class="t" style="right:905px;top:536px;font-size:12px;letter-spacing:-0.55px">0.01</div>
<div class="t" style="right:819px;top:536px;font-size:12px;letter-spacing:-0.55px">nzdusd.pc</div>
<div class="t" style="right:735px;top:536px;font-size:12px;letter-spacing:-0.55px">0.60457</div>
<div class="t" style="right:650px;top:536px;font-size:12px;letter-spacing:-0.55px">0.00000</div>
<div class="t" style="right:565px;top:536px;font-size:12px;letter-spacing:-0.55px">0.60337</div>
<div class="t" style="right:378px;top:536px;font-size:12px;letter-spacing:-0.55px">2024.02.05 20:13:51</div>
<div class="t" style="right:293px;top:536px;font-size:12px;letter-spacing:-0.55px">0.60585</div>
<div class="t" style="right:208px;top:536px;font-size:12px;letter-spacing:-0.55px">-0.06</div>
<div class="t" style="right:123px;top:536px;font-size:12px;letter-spacing:-0.55px">0.00</div>
<div class="t" style="right:26px;top:536px;font-size:12px;letter-spacing:-0.55px">-1.28</div>
<div style="position:absolute;left:16px;top:554px;width:1329px;height:19px;background:#fff"></div>
<div style="position:absolute;left:16px;top:573px;width:1329px;height:1px;background:#d4d4d4"></div>
<div style="position:absolute;left:124px;top:553px;width:1px;height:20px;background:#d4d4d4"></div>
<div style="position:absolute;left:311px;top:553px;width:1px;height:20px;background:#d4d4d4"></div>
<div style="position:absolute;left:396px;top:553px;width:1px;height:20px;background:#d4d4d4"></div>
<div style="position:absolute;left:464px;top:553px;width:1px;height:20px;background:#d4d4d4"></div>
<div style="position:absolute;left:549px;top:553px;width:1px;height:20px;background:#d4d4d4"></div>
<div style="position:absolute;left:634px;top:553px;width:1px;height:20px;background:#d4d4d4"></div>
<div style="position:absolute;left:719px;top:553px;width:1px;height:20px;background:#d4d4d4"></div>
<div style="position:absolute;left:804px;top:553px;width:1px;height:20px;background:#d4d4d4"></div>
<div style="position:absolute;left:991px;top:553px;width:1px;height:20px;background:#d4d4d4"></div>
<div style="position:absolute;left:1076px;top:553px;width:1px;height:20px;background:#d4d4d4"></div>
<div style="position:absolute;left:1161px;top:553px;width:1px;height:20px;background:#d4d4d4"></div>
<div style="position:absolute;left:1246px;top:553px;width:1px;height:20px;background:#d4d4d4"></div>
<svg style="left:19px;top:556px;" width="14" height="15" viewBox="0 0 14 15"><path d="M0.5 0.5 h8 l3 3 v10 h-11Z" fill="url(#gd)" stroke="#555"/><path d="M8.5 0.5 v3 h3" fill="none" stroke="#555"/><circle cx="10.5" cy="11.5" r="3.2" fill="url(#gb)" stroke="#0a5a9a" stroke-width=".7"/></svg>
<div class="t" style="left:38px;top:556px;font-size:12px;letter-spacing:-0.55px">37469203</div>
<div class="t" style="right:1057px;top:556px;font-size:12px;letter-spacing:-0.55px">2024.02.05 17:00:07</div>
<div class="t" style="right:972px;top:556px;font-size:12px;letter-spacing:-0.55px">buy</div>
<div class="t" style="right:905px;top:556px;font-size:12px;letter-spacing:-0.55px">0.03</div>
<div class="t" style="right:819px;top:556px;font-size:12px;letter-spacing:-0.55px">eurusd.pc</div>
<div class="t" style="right:735px;top:556px;font-size:12px;letter-spacing:-0.55px">1.07347</div>
<div class="t" style="right:650px;top:556px;font-size:12px;letter-spacing:-0.55px">0.00000</div>
<div class="t" style="right:565px;top:556px;font-size:12px;letter-spacing:-0.55px">0.00000</div>
<div class="t" style="right:378px;top:556px;font-size:12px;letter-spacing:-0.55px">2024.02.05 20:40:01</div>
<div class="t" style="right:293px;top:556px;font-size:12px;letter-spacing:-0.55px">1.07453</div>
<div class="t" style="right:208px;top:556px;font-size:12px;letter-spacing:-0.55px">-0.18</div>
<div class="t" style="right:123px;top:556px;font-size:12px;letter-spacing:-0.55px">0.00</div>
<div class="t" style="right:26px;top:556px;font-size:12px;letter-spacing:-0.55px">3.18</div>
<div style="position:absolute;left:16px;top:574px;width:1329px;height:19px;background:#e9e9e9"></div>
<div style="position:absolute;left:16px;top:593px;width:1329px;height:1px;background:#d4d4d4"></div>
<div style="position:absolute;left:124px;top:573px;width:1px;height:20px;background:#d4d4d4"></div>
<div style="position:absolute;left:311px;top:573px;width:1px;height:20px;background:#d4d4d4"></div>
<div style="position:absolute;left:396px;top:573px;width:1px;height:20px;background:#d4d4d4"></div>
<div style="position:absolute;left:464px;top:573px;width:1px;height:20px;background:#d4d4d4"></div>
<div style="position:absolute;left:549px;top:573px;width:1px;height:20px;background:#d4d4d4"></div>
<div style="position:absolute;left:634px;top:573px;width:1px;height:20px;background:#d4d4d4"></div>
<div style="position:absolute;left:719px;top:573px;width:1px;height:20px;background:#d4d4d4"></div>
<div style="position:absolute;left:804px;top:573px;width:1px;height:20px;background:#d4d4d4"></div>
<div style="position:absolute;left:991px;top:573px;width:1px;height:20px;background:#d4d4d4"></div>
<div style="position:absolute;left:1076px;top:573px;width:1px;height:20px;background:#d4d4d4"></div>
<div style="position:absolute;left:1161px;top:573px;width:1px;height:20px;background:#d4d4d4"></div>
<div style="position:absolute;left:1246px;top:573px;width:1px;height:20px;background:#d4d4d4"></div>
<svg style="left:19px;top:576px;" width="14" height="15" viewBox="0 0 14 15"><path d="M0.5 0.5 h8 l3 3 v10 h-11Z" fill="url(#gd)" stroke="#555"/><path d="M8.5 0.5 v3 h3" fill="none" stroke="#555"/><circle cx="10.5" cy="11.5" r="3.2" fill="url(#gr)" stroke="#a8300c" stroke-width=".7"/></svg>
<div class="t" style="left:38px;top:576px;font-size:12px;letter-spacing:-0.55px">37469869</div>
<div class="t" style="right:1057px;top:576px;font-size:12px;letter-spacing:-0.55px">2024.02.05 17:01:32</div>
<div class="t" style="right:972px;top:576px;font-size:12px;letter-spacing:-0.55px">sell</div>
<div class="t" style="right:905px;top:576px;font-size:12px;letter-spacing:-0.55px">0.01</div>
<div class="t" style="right:819px;top:576px;font-size:12px;letter-spacing:-0.55px">eurusd.pc</div>
<div class="t" style="right:735px;top:576px;font-size:12px;letter-spacing:-0.55px">1.07265</div>
<div class="t" style="right:650px;top:576px;font-size:12px;letter-spacing:-0.55px">0.00000</div>
<div class="t" style="right:565px;top:576px;font-size:12px;letter-spacing:-0.55px">1.07167</div>
<div class="t" style="right:378px;top:576px;font-size:12px;letter-spacing:-0.55px">2024.02.05 20:40:02</div>
<div class="t" style="right:293px;top:576px;font-size:12px;letter-spacing:-0.55px">1.07457</div>
<div class="t" style="right:208px;top:576px;font-size:12px;letter-spacing:-0.55px">-0.06</div>
<div class="t" style="right:123px;top:576px;font-size:12px;letter-spacing:-0.55px">0.00</div>
<div class="t" style="right:26px;top:576px;font-size:12px;letter-spacing:-0.55px">-1.92</div>
<div style="position:absolute;left:16px;top:594px;width:1329px;height:19px;background:#fff"></div>
<div style="position:absolute;left:16px;top:613px;width:1329px;height:1px;background:#d4d4d4"></div>
<div style="position:absolute;left:124px;top:593px;width:1px;height:20px;background:#d4d4d4"></div>
<div style="position:absolute;left:311px;top:593px;width:1px;height:20px;background:#d4d4d4"></div>
<div style="position:absolute;left:396px;top:593px;width:1px;height:20px;background:#d4d4d4"></div>
<div style="position:absolute;left:464px;top:593px;width:1px;height:20px;background:#d4d4d4"></div>
<div style="position:absolute;left:549px;top:593px;width:1px;height:20px;background:#d4d4d4"></div>
<div style="position:absolute;left:634px;top:593px;width:1px;height:20px;background:#d4d4d4"></div>
<div style="position:absolute;left:719px;top:593px;width:1px;height:20px;background:#d4d4d4"></div>
<div style="position:absolute;left:804px;top:593px;width:1px;height:20px;background:#d4d4d4"></div>
<div style="position:absolute;left:991px;top:593px;width:1px;height:20px;background:#d4d4d4"></div>
<div style="position:absolute;left:1076px;top:593px;width:1px;height:20px;background:#d4d4d4"></div>
<div style="position:absolute;left:1161px;top:593px;width:1px;height:20px;background:#d4d4d4"></div>
<div style="position:absolute;left:1246px;top:593px;width:1px;height:20px;background:#d4d4d4"></div>
<svg style="left:19px;top:596px;" width="14" height="15" viewBox="0 0 14 15"><path d="M0.5 0.5 h8 l3 3 v10 h-11Z" fill="url(#gd)" stroke="#555"/><path d="M8.5 0.5 v3 h3" fill="none" stroke="#555"/><circle cx="10.5" cy="11.5" r="3.2" fill="url(#gb)" stroke="#0a5a9a" stroke-width=".7"/></svg>
<div class="t" style="left:38px;top:596px;font-size:12px;letter-spacing:-0.55px">37470316</div>
<div class="t" style="right:1057px;top:596px;font-size:12px;letter-spacing:-0.55px">2024.02.05 17:04:38</div>
<div class="t" style="right:972px;top:596px;font-size:12px;letter-spacing:-0.55px">buy</div>
<div class="t" style="right:905px;top:596px;font-size:12px;letter-spacing:-0.55px">0.02</div>
<div class="t" style="right:819px;top:596px;font-size:12px;letter-spacing:-0.55px">nzdusd.pc</div>
<div class="t" style="right:735px;top:596px;font-size:12px;letter-spacing:-0.55px">0.60409</div>
<div class="t" style="right:650px;top:596px;font-size:12px;letter-spacing:-0.55px">0.00000</div>
<div class="t" style="right:565px;top:596px;font-size:12px;letter-spacing:-0.55px">0.00000</div>
<div class="t" style="right:378px;top:596px;font-size:12px;letter-spacing:-0.55px">2024.02.05 20:13:49</div>
<div class="t" style="right:293px;top:596px;font-size:12px;letter-spacing:-0.55px">0.60582</div>
<div class="t" style="right:208px;top:596px;font-size:12px;letter-spacing:-0.55px">-0.12</div>
<div class="t" style="right:123px;top:596px;font-size:12px;letter-spacing:-0.55px">0.00</div>
<div class="t" style="right:26px;top:596px;font-size:12px;letter-spacing:-0.55px">3.46</div>
<div style="position:absolute;left:16px;top:614px;width:1329px;height:19px;background:#e9e9e9"></div>
<div style="position:absolute;left:16px;top:633px;width:1329px;height:1px;background:#d4d4d4"></div>
<div style="position:absolute;left:124px;top:613px;width:1px;height:20px;background:#d4d4d4"></div>
<div style="position:absolute;left:311px;top:613px;width:1px;height:20px;background:#d4d4d4"></div>
<div style="position:absolute;left:396px;top:613px;width:1px;height:20px;background:#d4d4d4"></div>
<div style="position:absolute;left:464px;top:613px;width:1px;height:20px;background:#d4d4d4"></div>
<div style="position:absolute;left:549px;top:613px;width:1px;height:20px;background:#d4d4d4"></div>
<div style="position:absolute;left:634px;top:613px;width:1px;height:20px;background:#d4d4d4"></div>
<div style="position:absolute;left:719px;top:613px;width:1px;height:20px;background:#d4d4d4"></div>
<div style="position:absolute;left:804px;top:613px;width:1px;height:20px;background:#d4d4d4"></div>
<div style="position:absolute;left:991px;top:613px;width:1px;height:20px;background:#d4d4d4"></div>
<div style="position:absolute;left:1076px;top:613px;width:1px;height:20px;background:#d4d4d4"></div>
<div style="position:absolute;left:1161px;top:613px;width:1px;height:20px;background:#d4d4d4"></div>
<div style="position:absolute;left:1246px;top:613px;width:1px;height:20px;background:#d4d4d4"></div>
<svg style="left:19px;top:616px;" width="14" height="15" viewBox="0 0 14 15"><path d="M0.5 0.5 h8 l3 3 v10 h-11Z" fill="url(#gd)" stroke="#555"/><path d="M8.5 0.5 v3 h3" fill="none" stroke="#555"/><circle cx="10.5" cy="11.5" r="3.2" fill="url(#gb)" stroke="#0a5a9a" stroke-width=".7"/></svg>
<div class="t" style="left:38px;top:616px;font-size:12px;letter-spacing:-0.55px">37473784</div>
<div class="t" style="right:1057px;top:616px;font-size:12px;letter-spacing:-0.55px">2024.02.05 17:43:38</div>
<div class="t" style="right:972px;top:616px;font-size:12px;letter-spacing:-0.55px">buy</div>
<div class="t" style="right:905px;top:616px;font-size:12px;letter-spacing:-0.55px">0.03</div>
<div class="t" style="right:819px;top:616px;font-size:12px;letter-spacing:-0.55px">eurusd.pc</div>
<div class="t" style="right:735px;top:616px;font-size:12px;letter-spacing:-0.55px">1.07243</div>
<div class="t" style="right:650px;top:616px;font-size:12px;letter-spacing:-0.55px">0.00000</div>
<div class="t" style="right:565px;top:616px;font-size:12px;letter-spacing:-0.55px">0.00000</div>
<div class="t" style="right:378px;top:616px;font-size:12px;letter-spacing:-0.55px">2024.02.05 20:40:00</div>
<div class="t" style="right:293px;top:616px;font-size:12px;letter-spacing:-0.55px">1.07454</div>
<div class="t" style="right:208px;top:616px;font-size:12px;letter-spacing:-0.55px">-0.18</div>
<div class="t" style="right:123px;top:616px;font-size:12px;letter-spacing:-0.55px">0.00</div>
<div class="t" style="right:26px;top:616px;font-size:12px;letter-spacing:-0.55px">6.33</div>
<div style="position:absolute;left:16px;top:634px;width:1329px;height:19px;background:#fff"></div>
<div style="position:absolute;left:16px;top:653px;width:1329px;height:1px;background:#d4d4d4"></div>
<div style="position:absolute;left:124px;top:633px;width:1px;height:20px;background:#d4d4d4"></div>
<div style="position:absolute;left:311px;top:633px;width:1px;height:20px;background:#d4d4d4"></div>
<div style="position:absolute;left:396px;top:633px;width:1px;height:20px;background:#d4d4d4"></div>
<div style="position:absolute;left:464px;top:633px;width:1px;height:20px;background:#d4d4d4"></div>
<div style="position:absolute;left:549px;top:633px;width:1px;height:20px;background:#d4d4d4"></div>
<div style="position:absolute;left:634px;top:633px;width:1px;height:20px;background:#d4d4d4"></div>
<div style="position:absolute;left:719px;top:633px;width:1px;height:20px;background:#d4d4d4"></div>
<div style="position:absolute;left:804px;top:633px;width:1px;height:20px;background:#d4d4d4"></div>
<div style="position:absolute;left:991px;top:633px;width:1px;height:20px;background:#d4d4d4"></div>
<div style="position:absolute;left:1076px;top:633px;width:1px;height:20px;background:#d4d4d4"></div>
<div style="position:absolute;left:1161px;top:633px;width:1px;height:20px;background:#d4d4d4"></div>
<div style="position:absolute;left:1246px;top:633px;width:1px;height:20px;background:#d4d4d4"></div>
<div style="position:absolute;left:721px;top:634px;width:82px;height:18px;background:#62f062"></div>
<svg style="left:19px;top:636px;" width="14" height="15" viewBox="0 0 14 15"><path d="M0.5 0.5 h8 l3 3 v10 h-11Z" fill="url(#gd)" stroke="#555"/><path d="M8.5 0.5 v3 h3" fill="none" stroke="#555"/><circle cx="10.5" cy="11.5" r="3.2" fill="url(#gr)" stroke="#a8300c" stroke-width=".7"/></svg>
<div class="t" style="left:38px;top:636px;font-size:12px;letter-spacing:-0.55px">37480322</div>
<div class="t" style="right:1057px;top:636px;font-size:12px;letter-spacing:-0.55px">2024.02.05 20:13:52</div>
<div class="t" style="right:972px;top:636px;font-size:12px;letter-spacing:-0.55px">sell</div>
<div class="t" style="right:905px;top:636px;font-size:12px;letter-spacing:-0.55px">0.01</div>
<div class="t" style="right:819px;top:636px;font-size:12px;letter-spacing:-0.55px">nzdusd.pc</div>
<div class="t" style="right:735px;top:636px;font-size:12px;letter-spacing:-0.55px">0.60582</div>
<div class="t" style="right:650px;top:636px;font-size:12px;letter-spacing:-0.55px">0.00000</div>
<div class="t" style="right:565px;top:636px;font-size:12px;letter-spacing:-0.55px">0.60482</div>
<div class="t" style="right:378px;top:636px;font-size:12px;letter-spacing:-0.55px">2024.02.05 22:15:23</div>
<div class="t" style="right:293px;top:636px;font-size:12px;letter-spacing:-0.55px">0.60483</div>
<div class="t" style="right:208px;top:636px;font-size:12px;letter-spacing:-0.55px">-0.06</div>
<div class="t" style="right:123px;top:636px;font-size:12px;letter-spacing:-0.55px">0.00</div>
<div class="t" style="right:26px;top:636px;font-size:12px;letter-spacing:-0.55px">0.99</div>
<div style="position:absolute;left:16px;top:654px;width:1329px;height:19px;background:#c8c8c8"></div>
<div style="position:absolute;left:16px;top:673px;width:1329px;height:6px;background:#fff"></div>
<svg style="left:22px;top:659px;" width="9" height="9" viewBox="0 0 9 9"><circle cx="4.5" cy="4.5" r="3.8" fill="#d8d8d8" stroke="#8a8a8a"/></svg>
<div class="t" style="left:38px;top:656px;font-size:12px;font-weight:bold;letter-spacing:-0.12px">Profit/Loss: 3 605.61</div>
<div class="t" style="left:158px;top:656px;font-size:12px;font-weight:bold;letter-spacing:-0.12px">Credit: 0.00</div>
<div class="t" style="left:228px;top:656px;font-size:12px;font-weight:bold;letter-spacing:-0.12px">Deposit: 1 024.00</div>
<div class="t" style="left:332px;top:656px;font-size:12px;font-weight:bold;letter-spacing:-0.12px">Withdrawal: -4 233.00</div>
<div class="t" style="right:26px;top:656px;font-size:12px;font-weight:bold;letter-spacing:0.1px">396.61</div>
<div style="position:absolute;left:1345px;top:349px;width:18px;height:328px;background:#f0f0f0"></div>
<svg style="left:1349px;top:355px;" width="10" height="7" viewBox="0 0 10 7"><path d="M1 6 L5 2 L9 6" fill="none" stroke="#606060" stroke-width="2"/></svg>
<div style="position:absolute;left:1346px;top:645px;width:15px;height:17px;background:#cdcdcd"></div>
<svg style="left:1349px;top:667px;" width="10" height="7" viewBox="0 0 10 7"><path d="M1 1 L5 5 L9 1" fill="none" stroke="#606060" stroke-width="2"/></svg>
<div style="position:absolute;left:15px;top:679px;width:1348px;height:1px;background:#000"></div>
<div style="position:absolute;left:135px;top:679px;width:107px;height:21px;background:#fff;border-left:1px solid #000;border-right:1px solid #000;border-bottom:1px solid #000"></div>
<div class="t" style="left:28px;top:682px;font-size:12px;letter-spacing:-0.2px;color:#7f7f7f">Trade</div>
<div class="t" style="left:77px;top:682px;font-size:12px;letter-spacing:-0.2px;color:#7f7f7f">Exposure</div>
<div class="t" style="left:145px;top:682px;font-size:12px;letter-spacing:0.1px;color:#000">Account History</div>
<div class="t" style="left:251px;top:682px;font-size:12px;letter-spacing:-0.2px;color:#7f7f7f">News</div>
<div class="t" style="left:312px;top:682px;font-size:12px;letter-spacing:-0.2px;color:#7f7f7f">Alerts</div>
<div class="t" style="left:362px;top:682px;font-size:12px;letter-spacing:-0.2px;color:#7f7f7f">Mailbox</div>
<div class="t" style="left:432px;top:682px;font-size:12px;letter-spacing:-0.2px;color:#7f7f7f">Company</div>
<div class="t" style="left:504px;top:682px;font-size:12px;letter-spacing:-0.2px;color:#7f7f7f">Market</div>
<div class="t" style="left:578px;top:682px;font-size:12px;letter-spacing:-0.2px;color:#7f7f7f">Signals</div>
<div class="t" style="left:636px;top:682px;font-size:12px;letter-spacing:-0.2px;color:#7f7f7f">Articles</div>
<div class="t" style="left:694px;top:682px;font-size:12px;letter-spacing:-0.2px;color:#7f7f7f">Code Base</div>
<div class="t" style="left:769px;top:682px;font-size:12px;letter-spacing:-0.2px;color:#7f7f7f">Experts</div>
<div class="t" style="left:827px;top:682px;font-size:12px;letter-spacing:-0.2px;color:#7f7f7f">Journal</div>
<div style="position:absolute;left:67px;top:683px;width:1px;height:14px;background:#7a7a7a"></div>
<div style="position:absolute;left:302px;top:683px;width:1px;height:14px;background:#7a7a7a"></div>
<div style="position:absolute;left:352px;top:683px;width:1px;height:14px;background:#7a7a7a"></div>
<div style="position:absolute;left:422px;top:683px;width:1px;height:14px;background:#7a7a7a"></div>
<div style="position:absolute;left:494px;top:683px;width:1px;height:14px;background:#7a7a7a"></div>
<div style="position:absolute;left:568px;top:683px;width:1px;height:14px;background:#7a7a7a"></div>
<div style="position:absolute;left:625px;top:683px;width:1px;height:14px;background:#7a7a7a"></div>
<div style="position:absolute;left:684px;top:683px;width:1px;height:14px;background:#7a7a7a"></div>
<div style="position:absolute;left:759px;top:683px;width:1px;height:14px;background:#7a7a7a"></div>
<div style="position:absolute;left:817px;top:683px;width:1px;height:14px;background:#7a7a7a"></div>
<div style="position:absolute;left:875px;top:683px;width:1px;height:14px;background:#7a7a7a"></div>
<div class="t" style="left:283px;top:688px;font-size:9px;line-height:10px;color:#e0201c;font-weight:bold">13</div>
<div class="t" style="left:408px;top:688px;font-size:9px;line-height:10px;color:#e0201c;font-weight:bold">6</div>
<div class="t" style="left:543px;top:688px;font-size:9px;line-height:10px;color:#e0201c;font-weight:bold">110</div>
<div style="position:absolute;left:0px;top:700px;width:1364px;height:1px;background:#fff"></div>
<div style="position:absolute;left:1363px;top:344px;width:1px;height:357px;background:#fff"></div>
<div style="position:absolute;left:0px;top:703px;width:1366px;height:1px;background:#d9d9d9"></div>
<div style="position:absolute;left:0px;top:704px;width:1366px;height:24px;background:#f0f0f0"></div>
<div class="t" style="left:3px;top:711px;font-size:12px;letter-spacing:-0.45px">For Help, press F1</div>
<div style="position:absolute;left:672px;top:707px;width:1px;height:18px;background:#d0d0d0"></div>
<div style="position:absolute;left:788px;top:707px;width:1px;height:18px;background:#d0d0d0"></div>
<div style="position:absolute;left:890px;top:707px;width:1px;height:18px;background:#d0d0d0"></div>
<div style="position:absolute;left:962px;top:707px;width:1px;height:18px;background:#d0d0d0"></div>
<div style="position:absolute;left:1033px;top:707px;width:1px;height:18px;background:#d0d0d0"></div>
<div style="position:absolute;left:1101px;top:707px;width:1px;height:18px;background:#d0d0d0"></div>
<div style="position:absolute;left:1170px;top:707px;width:1px;height:18px;background:#d0d0d0"></div>
<div style="position:absolute;left:1236px;top:707px;width:1px;height:18px;background:#d0d0d0"></div>
<div class="t" style="left:678px;top:711px;font-size:12px;letter-spacing:-0.1px">Default</div>
<svg style="left:1242px;top:710px;" width="24" height="14" viewBox="0 0 24 14"><rect x="0" y="0" width="2" height="14" fill="#4a7f3a"/><rect x="3" y="0" width="2" height="14" fill="#4a7f3a"/><rect x="6" y="0" width="2" height="14" fill="#4a7f3a"/><rect x="9" y="0" width="2" height="14" fill="#4a7f3a"/><rect x="12" y="0" width="2" height="14" fill="#1d3a7a"/><rect x="15" y="0" width="2" height="14" fill="#1d3a7a"/><rect x="18" y="0" width="2" height="14" fill="#1d3a7a"/><rect x="21" y="0" width="2" height="14" fill="#1d3a7a"/></svg>
<div class="t" style="left:1270px;top:711px;font-size:12px;letter-spacing:-0.1px">937/1 kb</div>
<svg style="left:1350px;top:712px;" width="16" height="16" viewBox="0 0 16 16"><path d="M16 1 L1 16 M16 5 L5 16 M16 9 L9 16 M16 13 L13 16" stroke="#a8a8a8" stroke-width="1"/></svg>
<div style="position:absolute;left:33px;top:447px;width:877px;height:69px;border:5px solid #000;background:transparent"></div>
<div style="position:absolute;left:38px;top:452px;width:867px;height:55px;background:#fff"></div>
<div class="t" style="left:39px;top:451px;font-size:49.2px;line-height:50px;font-weight:bold;color:#22b14c;letter-spacing:-0.55px">Deposit $1000 Profit 3605 in 8 Months</div>
<div style="position:absolute;left:12px;top:648px;width:474px;height:33px;border:5px solid #ed1c24;border-top-width:4px"></div>
<svg style="left:0px;top:0px;" width="1366" height="728" viewBox="0 0 1366 728"><path d="M222.5 515 V577 H194 L255 636 L316 577 H286.5 V515" fill="none" stroke="#ed1c24" stroke-width="5" stroke-linejoin="miter"/></svg></body></html>
